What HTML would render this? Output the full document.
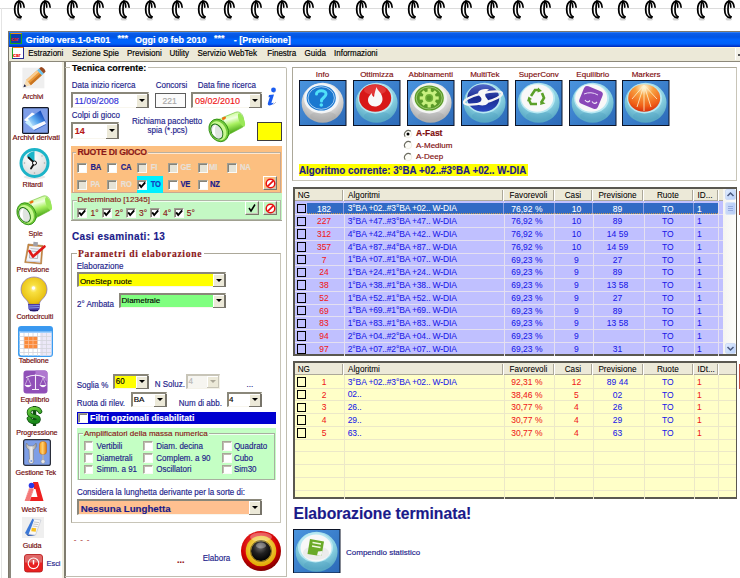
<!DOCTYPE html><html><head><meta charset='utf-8'><style>
*{margin:0;padding:0;box-sizing:border-box}
html,body{width:740px;height:578px;overflow:hidden;background:#fff;font-family:"Liberation Sans",sans-serif;}
.a{position:absolute}
.t{position:absolute;white-space:nowrap;line-height:1;-webkit-text-stroke:0.15px currentColor;margin-top:0.6px}
.g{margin-top:0}
.s8{font-size:8px}
.nv{color:#1a1a8c}
.dr{color:#8b1010}
</style></head><body>
<div class='a' style='left:0;top:8px;width:740px;height:1px;background:#dcdcdc'></div>
<div class='a' style='left:1px;top:8px;width:1px;height:570px;background:#e4e4e4'></div>
<svg class='a' style='left:10.0px;top:0' width='18' height='22' viewBox='0 0 18 22'>
<ellipse cx='8.8' cy='18.9' rx='3.2' ry='1.6' fill='#d4d4d4'/>
<g fill='none' stroke='#000' stroke-linecap='round'>
<path d='M8.8 1.2 C5.5 2.5 4.7 6 4.7 9.5 C4.7 13.5 6.5 17.6 10.2 17.6' stroke-width='1.8'/>
<path d='M9 1.6 C8.2 4 8 7 8 9.5 C8 13 9 16 11 16.8' stroke-width='1.7'/>
<path d='M8.8 1.2 C11.5 0.5 13.8 3 14.1 7.2' stroke-width='1.7'/>
<path d='M9 1.6 C10.2 2.5 10.8 5 10.8 7.2' stroke-width='1.6'/>
<path d='M10.2 17.6 L11 16.8' stroke-width='1.6'/>
</g></svg>
<svg class='a' style='left:36.28px;top:0' width='18' height='22' viewBox='0 0 18 22'>
<ellipse cx='8.8' cy='18.9' rx='3.2' ry='1.6' fill='#d4d4d4'/>
<g fill='none' stroke='#000' stroke-linecap='round'>
<path d='M8.8 1.2 C5.5 2.5 4.7 6 4.7 9.5 C4.7 13.5 6.5 17.6 10.2 17.6' stroke-width='1.8'/>
<path d='M9 1.6 C8.2 4 8 7 8 9.5 C8 13 9 16 11 16.8' stroke-width='1.7'/>
<path d='M8.8 1.2 C11.5 0.5 13.8 3 14.1 7.2' stroke-width='1.7'/>
<path d='M9 1.6 C10.2 2.5 10.8 5 10.8 7.2' stroke-width='1.6'/>
<path d='M10.2 17.6 L11 16.8' stroke-width='1.6'/>
</g></svg>
<svg class='a' style='left:62.56px;top:0' width='18' height='22' viewBox='0 0 18 22'>
<ellipse cx='8.8' cy='18.9' rx='3.2' ry='1.6' fill='#d4d4d4'/>
<g fill='none' stroke='#000' stroke-linecap='round'>
<path d='M8.8 1.2 C5.5 2.5 4.7 6 4.7 9.5 C4.7 13.5 6.5 17.6 10.2 17.6' stroke-width='1.8'/>
<path d='M9 1.6 C8.2 4 8 7 8 9.5 C8 13 9 16 11 16.8' stroke-width='1.7'/>
<path d='M8.8 1.2 C11.5 0.5 13.8 3 14.1 7.2' stroke-width='1.7'/>
<path d='M9 1.6 C10.2 2.5 10.8 5 10.8 7.2' stroke-width='1.6'/>
<path d='M10.2 17.6 L11 16.8' stroke-width='1.6'/>
</g></svg>
<svg class='a' style='left:88.84px;top:0' width='18' height='22' viewBox='0 0 18 22'>
<ellipse cx='8.8' cy='18.9' rx='3.2' ry='1.6' fill='#d4d4d4'/>
<g fill='none' stroke='#000' stroke-linecap='round'>
<path d='M8.8 1.2 C5.5 2.5 4.7 6 4.7 9.5 C4.7 13.5 6.5 17.6 10.2 17.6' stroke-width='1.8'/>
<path d='M9 1.6 C8.2 4 8 7 8 9.5 C8 13 9 16 11 16.8' stroke-width='1.7'/>
<path d='M8.8 1.2 C11.5 0.5 13.8 3 14.1 7.2' stroke-width='1.7'/>
<path d='M9 1.6 C10.2 2.5 10.8 5 10.8 7.2' stroke-width='1.6'/>
<path d='M10.2 17.6 L11 16.8' stroke-width='1.6'/>
</g></svg>
<svg class='a' style='left:115.12px;top:0' width='18' height='22' viewBox='0 0 18 22'>
<ellipse cx='8.8' cy='18.9' rx='3.2' ry='1.6' fill='#d4d4d4'/>
<g fill='none' stroke='#000' stroke-linecap='round'>
<path d='M8.8 1.2 C5.5 2.5 4.7 6 4.7 9.5 C4.7 13.5 6.5 17.6 10.2 17.6' stroke-width='1.8'/>
<path d='M9 1.6 C8.2 4 8 7 8 9.5 C8 13 9 16 11 16.8' stroke-width='1.7'/>
<path d='M8.8 1.2 C11.5 0.5 13.8 3 14.1 7.2' stroke-width='1.7'/>
<path d='M9 1.6 C10.2 2.5 10.8 5 10.8 7.2' stroke-width='1.6'/>
<path d='M10.2 17.6 L11 16.8' stroke-width='1.6'/>
</g></svg>
<svg class='a' style='left:141.4px;top:0' width='18' height='22' viewBox='0 0 18 22'>
<ellipse cx='8.8' cy='18.9' rx='3.2' ry='1.6' fill='#d4d4d4'/>
<g fill='none' stroke='#000' stroke-linecap='round'>
<path d='M8.8 1.2 C5.5 2.5 4.7 6 4.7 9.5 C4.7 13.5 6.5 17.6 10.2 17.6' stroke-width='1.8'/>
<path d='M9 1.6 C8.2 4 8 7 8 9.5 C8 13 9 16 11 16.8' stroke-width='1.7'/>
<path d='M8.8 1.2 C11.5 0.5 13.8 3 14.1 7.2' stroke-width='1.7'/>
<path d='M9 1.6 C10.2 2.5 10.8 5 10.8 7.2' stroke-width='1.6'/>
<path d='M10.2 17.6 L11 16.8' stroke-width='1.6'/>
</g></svg>
<svg class='a' style='left:167.68px;top:0' width='18' height='22' viewBox='0 0 18 22'>
<ellipse cx='8.8' cy='18.9' rx='3.2' ry='1.6' fill='#d4d4d4'/>
<g fill='none' stroke='#000' stroke-linecap='round'>
<path d='M8.8 1.2 C5.5 2.5 4.7 6 4.7 9.5 C4.7 13.5 6.5 17.6 10.2 17.6' stroke-width='1.8'/>
<path d='M9 1.6 C8.2 4 8 7 8 9.5 C8 13 9 16 11 16.8' stroke-width='1.7'/>
<path d='M8.8 1.2 C11.5 0.5 13.8 3 14.1 7.2' stroke-width='1.7'/>
<path d='M9 1.6 C10.2 2.5 10.8 5 10.8 7.2' stroke-width='1.6'/>
<path d='M10.2 17.6 L11 16.8' stroke-width='1.6'/>
</g></svg>
<svg class='a' style='left:193.96px;top:0' width='18' height='22' viewBox='0 0 18 22'>
<ellipse cx='8.8' cy='18.9' rx='3.2' ry='1.6' fill='#d4d4d4'/>
<g fill='none' stroke='#000' stroke-linecap='round'>
<path d='M8.8 1.2 C5.5 2.5 4.7 6 4.7 9.5 C4.7 13.5 6.5 17.6 10.2 17.6' stroke-width='1.8'/>
<path d='M9 1.6 C8.2 4 8 7 8 9.5 C8 13 9 16 11 16.8' stroke-width='1.7'/>
<path d='M8.8 1.2 C11.5 0.5 13.8 3 14.1 7.2' stroke-width='1.7'/>
<path d='M9 1.6 C10.2 2.5 10.8 5 10.8 7.2' stroke-width='1.6'/>
<path d='M10.2 17.6 L11 16.8' stroke-width='1.6'/>
</g></svg>
<svg class='a' style='left:220.24px;top:0' width='18' height='22' viewBox='0 0 18 22'>
<ellipse cx='8.8' cy='18.9' rx='3.2' ry='1.6' fill='#d4d4d4'/>
<g fill='none' stroke='#000' stroke-linecap='round'>
<path d='M8.8 1.2 C5.5 2.5 4.7 6 4.7 9.5 C4.7 13.5 6.5 17.6 10.2 17.6' stroke-width='1.8'/>
<path d='M9 1.6 C8.2 4 8 7 8 9.5 C8 13 9 16 11 16.8' stroke-width='1.7'/>
<path d='M8.8 1.2 C11.5 0.5 13.8 3 14.1 7.2' stroke-width='1.7'/>
<path d='M9 1.6 C10.2 2.5 10.8 5 10.8 7.2' stroke-width='1.6'/>
<path d='M10.2 17.6 L11 16.8' stroke-width='1.6'/>
</g></svg>
<svg class='a' style='left:246.52px;top:0' width='18' height='22' viewBox='0 0 18 22'>
<ellipse cx='8.8' cy='18.9' rx='3.2' ry='1.6' fill='#d4d4d4'/>
<g fill='none' stroke='#000' stroke-linecap='round'>
<path d='M8.8 1.2 C5.5 2.5 4.7 6 4.7 9.5 C4.7 13.5 6.5 17.6 10.2 17.6' stroke-width='1.8'/>
<path d='M9 1.6 C8.2 4 8 7 8 9.5 C8 13 9 16 11 16.8' stroke-width='1.7'/>
<path d='M8.8 1.2 C11.5 0.5 13.8 3 14.1 7.2' stroke-width='1.7'/>
<path d='M9 1.6 C10.2 2.5 10.8 5 10.8 7.2' stroke-width='1.6'/>
<path d='M10.2 17.6 L11 16.8' stroke-width='1.6'/>
</g></svg>
<svg class='a' style='left:272.8px;top:0' width='18' height='22' viewBox='0 0 18 22'>
<ellipse cx='8.8' cy='18.9' rx='3.2' ry='1.6' fill='#d4d4d4'/>
<g fill='none' stroke='#000' stroke-linecap='round'>
<path d='M8.8 1.2 C5.5 2.5 4.7 6 4.7 9.5 C4.7 13.5 6.5 17.6 10.2 17.6' stroke-width='1.8'/>
<path d='M9 1.6 C8.2 4 8 7 8 9.5 C8 13 9 16 11 16.8' stroke-width='1.7'/>
<path d='M8.8 1.2 C11.5 0.5 13.8 3 14.1 7.2' stroke-width='1.7'/>
<path d='M9 1.6 C10.2 2.5 10.8 5 10.8 7.2' stroke-width='1.6'/>
<path d='M10.2 17.6 L11 16.8' stroke-width='1.6'/>
</g></svg>
<svg class='a' style='left:299.08px;top:0' width='18' height='22' viewBox='0 0 18 22'>
<ellipse cx='8.8' cy='18.9' rx='3.2' ry='1.6' fill='#d4d4d4'/>
<g fill='none' stroke='#000' stroke-linecap='round'>
<path d='M8.8 1.2 C5.5 2.5 4.7 6 4.7 9.5 C4.7 13.5 6.5 17.6 10.2 17.6' stroke-width='1.8'/>
<path d='M9 1.6 C8.2 4 8 7 8 9.5 C8 13 9 16 11 16.8' stroke-width='1.7'/>
<path d='M8.8 1.2 C11.5 0.5 13.8 3 14.1 7.2' stroke-width='1.7'/>
<path d='M9 1.6 C10.2 2.5 10.8 5 10.8 7.2' stroke-width='1.6'/>
<path d='M10.2 17.6 L11 16.8' stroke-width='1.6'/>
</g></svg>
<svg class='a' style='left:325.36px;top:0' width='18' height='22' viewBox='0 0 18 22'>
<ellipse cx='8.8' cy='18.9' rx='3.2' ry='1.6' fill='#d4d4d4'/>
<g fill='none' stroke='#000' stroke-linecap='round'>
<path d='M8.8 1.2 C5.5 2.5 4.7 6 4.7 9.5 C4.7 13.5 6.5 17.6 10.2 17.6' stroke-width='1.8'/>
<path d='M9 1.6 C8.2 4 8 7 8 9.5 C8 13 9 16 11 16.8' stroke-width='1.7'/>
<path d='M8.8 1.2 C11.5 0.5 13.8 3 14.1 7.2' stroke-width='1.7'/>
<path d='M9 1.6 C10.2 2.5 10.8 5 10.8 7.2' stroke-width='1.6'/>
<path d='M10.2 17.6 L11 16.8' stroke-width='1.6'/>
</g></svg>
<svg class='a' style='left:351.64px;top:0' width='18' height='22' viewBox='0 0 18 22'>
<ellipse cx='8.8' cy='18.9' rx='3.2' ry='1.6' fill='#d4d4d4'/>
<g fill='none' stroke='#000' stroke-linecap='round'>
<path d='M8.8 1.2 C5.5 2.5 4.7 6 4.7 9.5 C4.7 13.5 6.5 17.6 10.2 17.6' stroke-width='1.8'/>
<path d='M9 1.6 C8.2 4 8 7 8 9.5 C8 13 9 16 11 16.8' stroke-width='1.7'/>
<path d='M8.8 1.2 C11.5 0.5 13.8 3 14.1 7.2' stroke-width='1.7'/>
<path d='M9 1.6 C10.2 2.5 10.8 5 10.8 7.2' stroke-width='1.6'/>
<path d='M10.2 17.6 L11 16.8' stroke-width='1.6'/>
</g></svg>
<svg class='a' style='left:377.92px;top:0' width='18' height='22' viewBox='0 0 18 22'>
<ellipse cx='8.8' cy='18.9' rx='3.2' ry='1.6' fill='#d4d4d4'/>
<g fill='none' stroke='#000' stroke-linecap='round'>
<path d='M8.8 1.2 C5.5 2.5 4.7 6 4.7 9.5 C4.7 13.5 6.5 17.6 10.2 17.6' stroke-width='1.8'/>
<path d='M9 1.6 C8.2 4 8 7 8 9.5 C8 13 9 16 11 16.8' stroke-width='1.7'/>
<path d='M8.8 1.2 C11.5 0.5 13.8 3 14.1 7.2' stroke-width='1.7'/>
<path d='M9 1.6 C10.2 2.5 10.8 5 10.8 7.2' stroke-width='1.6'/>
<path d='M10.2 17.6 L11 16.8' stroke-width='1.6'/>
</g></svg>
<svg class='a' style='left:404.2px;top:0' width='18' height='22' viewBox='0 0 18 22'>
<ellipse cx='8.8' cy='18.9' rx='3.2' ry='1.6' fill='#d4d4d4'/>
<g fill='none' stroke='#000' stroke-linecap='round'>
<path d='M8.8 1.2 C5.5 2.5 4.7 6 4.7 9.5 C4.7 13.5 6.5 17.6 10.2 17.6' stroke-width='1.8'/>
<path d='M9 1.6 C8.2 4 8 7 8 9.5 C8 13 9 16 11 16.8' stroke-width='1.7'/>
<path d='M8.8 1.2 C11.5 0.5 13.8 3 14.1 7.2' stroke-width='1.7'/>
<path d='M9 1.6 C10.2 2.5 10.8 5 10.8 7.2' stroke-width='1.6'/>
<path d='M10.2 17.6 L11 16.8' stroke-width='1.6'/>
</g></svg>
<svg class='a' style='left:430.48px;top:0' width='18' height='22' viewBox='0 0 18 22'>
<ellipse cx='8.8' cy='18.9' rx='3.2' ry='1.6' fill='#d4d4d4'/>
<g fill='none' stroke='#000' stroke-linecap='round'>
<path d='M8.8 1.2 C5.5 2.5 4.7 6 4.7 9.5 C4.7 13.5 6.5 17.6 10.2 17.6' stroke-width='1.8'/>
<path d='M9 1.6 C8.2 4 8 7 8 9.5 C8 13 9 16 11 16.8' stroke-width='1.7'/>
<path d='M8.8 1.2 C11.5 0.5 13.8 3 14.1 7.2' stroke-width='1.7'/>
<path d='M9 1.6 C10.2 2.5 10.8 5 10.8 7.2' stroke-width='1.6'/>
<path d='M10.2 17.6 L11 16.8' stroke-width='1.6'/>
</g></svg>
<svg class='a' style='left:456.76px;top:0' width='18' height='22' viewBox='0 0 18 22'>
<ellipse cx='8.8' cy='18.9' rx='3.2' ry='1.6' fill='#d4d4d4'/>
<g fill='none' stroke='#000' stroke-linecap='round'>
<path d='M8.8 1.2 C5.5 2.5 4.7 6 4.7 9.5 C4.7 13.5 6.5 17.6 10.2 17.6' stroke-width='1.8'/>
<path d='M9 1.6 C8.2 4 8 7 8 9.5 C8 13 9 16 11 16.8' stroke-width='1.7'/>
<path d='M8.8 1.2 C11.5 0.5 13.8 3 14.1 7.2' stroke-width='1.7'/>
<path d='M9 1.6 C10.2 2.5 10.8 5 10.8 7.2' stroke-width='1.6'/>
<path d='M10.2 17.6 L11 16.8' stroke-width='1.6'/>
</g></svg>
<svg class='a' style='left:483.04px;top:0' width='18' height='22' viewBox='0 0 18 22'>
<ellipse cx='8.8' cy='18.9' rx='3.2' ry='1.6' fill='#d4d4d4'/>
<g fill='none' stroke='#000' stroke-linecap='round'>
<path d='M8.8 1.2 C5.5 2.5 4.7 6 4.7 9.5 C4.7 13.5 6.5 17.6 10.2 17.6' stroke-width='1.8'/>
<path d='M9 1.6 C8.2 4 8 7 8 9.5 C8 13 9 16 11 16.8' stroke-width='1.7'/>
<path d='M8.8 1.2 C11.5 0.5 13.8 3 14.1 7.2' stroke-width='1.7'/>
<path d='M9 1.6 C10.2 2.5 10.8 5 10.8 7.2' stroke-width='1.6'/>
<path d='M10.2 17.6 L11 16.8' stroke-width='1.6'/>
</g></svg>
<svg class='a' style='left:509.32px;top:0' width='18' height='22' viewBox='0 0 18 22'>
<ellipse cx='8.8' cy='18.9' rx='3.2' ry='1.6' fill='#d4d4d4'/>
<g fill='none' stroke='#000' stroke-linecap='round'>
<path d='M8.8 1.2 C5.5 2.5 4.7 6 4.7 9.5 C4.7 13.5 6.5 17.6 10.2 17.6' stroke-width='1.8'/>
<path d='M9 1.6 C8.2 4 8 7 8 9.5 C8 13 9 16 11 16.8' stroke-width='1.7'/>
<path d='M8.8 1.2 C11.5 0.5 13.8 3 14.1 7.2' stroke-width='1.7'/>
<path d='M9 1.6 C10.2 2.5 10.8 5 10.8 7.2' stroke-width='1.6'/>
<path d='M10.2 17.6 L11 16.8' stroke-width='1.6'/>
</g></svg>
<svg class='a' style='left:535.6px;top:0' width='18' height='22' viewBox='0 0 18 22'>
<ellipse cx='8.8' cy='18.9' rx='3.2' ry='1.6' fill='#d4d4d4'/>
<g fill='none' stroke='#000' stroke-linecap='round'>
<path d='M8.8 1.2 C5.5 2.5 4.7 6 4.7 9.5 C4.7 13.5 6.5 17.6 10.2 17.6' stroke-width='1.8'/>
<path d='M9 1.6 C8.2 4 8 7 8 9.5 C8 13 9 16 11 16.8' stroke-width='1.7'/>
<path d='M8.8 1.2 C11.5 0.5 13.8 3 14.1 7.2' stroke-width='1.7'/>
<path d='M9 1.6 C10.2 2.5 10.8 5 10.8 7.2' stroke-width='1.6'/>
<path d='M10.2 17.6 L11 16.8' stroke-width='1.6'/>
</g></svg>
<svg class='a' style='left:561.88px;top:0' width='18' height='22' viewBox='0 0 18 22'>
<ellipse cx='8.8' cy='18.9' rx='3.2' ry='1.6' fill='#d4d4d4'/>
<g fill='none' stroke='#000' stroke-linecap='round'>
<path d='M8.8 1.2 C5.5 2.5 4.7 6 4.7 9.5 C4.7 13.5 6.5 17.6 10.2 17.6' stroke-width='1.8'/>
<path d='M9 1.6 C8.2 4 8 7 8 9.5 C8 13 9 16 11 16.8' stroke-width='1.7'/>
<path d='M8.8 1.2 C11.5 0.5 13.8 3 14.1 7.2' stroke-width='1.7'/>
<path d='M9 1.6 C10.2 2.5 10.8 5 10.8 7.2' stroke-width='1.6'/>
<path d='M10.2 17.6 L11 16.8' stroke-width='1.6'/>
</g></svg>
<svg class='a' style='left:588.16px;top:0' width='18' height='22' viewBox='0 0 18 22'>
<ellipse cx='8.8' cy='18.9' rx='3.2' ry='1.6' fill='#d4d4d4'/>
<g fill='none' stroke='#000' stroke-linecap='round'>
<path d='M8.8 1.2 C5.5 2.5 4.7 6 4.7 9.5 C4.7 13.5 6.5 17.6 10.2 17.6' stroke-width='1.8'/>
<path d='M9 1.6 C8.2 4 8 7 8 9.5 C8 13 9 16 11 16.8' stroke-width='1.7'/>
<path d='M8.8 1.2 C11.5 0.5 13.8 3 14.1 7.2' stroke-width='1.7'/>
<path d='M9 1.6 C10.2 2.5 10.8 5 10.8 7.2' stroke-width='1.6'/>
<path d='M10.2 17.6 L11 16.8' stroke-width='1.6'/>
</g></svg>
<svg class='a' style='left:614.44px;top:0' width='18' height='22' viewBox='0 0 18 22'>
<ellipse cx='8.8' cy='18.9' rx='3.2' ry='1.6' fill='#d4d4d4'/>
<g fill='none' stroke='#000' stroke-linecap='round'>
<path d='M8.8 1.2 C5.5 2.5 4.7 6 4.7 9.5 C4.7 13.5 6.5 17.6 10.2 17.6' stroke-width='1.8'/>
<path d='M9 1.6 C8.2 4 8 7 8 9.5 C8 13 9 16 11 16.8' stroke-width='1.7'/>
<path d='M8.8 1.2 C11.5 0.5 13.8 3 14.1 7.2' stroke-width='1.7'/>
<path d='M9 1.6 C10.2 2.5 10.8 5 10.8 7.2' stroke-width='1.6'/>
<path d='M10.2 17.6 L11 16.8' stroke-width='1.6'/>
</g></svg>
<svg class='a' style='left:640.72px;top:0' width='18' height='22' viewBox='0 0 18 22'>
<ellipse cx='8.8' cy='18.9' rx='3.2' ry='1.6' fill='#d4d4d4'/>
<g fill='none' stroke='#000' stroke-linecap='round'>
<path d='M8.8 1.2 C5.5 2.5 4.7 6 4.7 9.5 C4.7 13.5 6.5 17.6 10.2 17.6' stroke-width='1.8'/>
<path d='M9 1.6 C8.2 4 8 7 8 9.5 C8 13 9 16 11 16.8' stroke-width='1.7'/>
<path d='M8.8 1.2 C11.5 0.5 13.8 3 14.1 7.2' stroke-width='1.7'/>
<path d='M9 1.6 C10.2 2.5 10.8 5 10.8 7.2' stroke-width='1.6'/>
<path d='M10.2 17.6 L11 16.8' stroke-width='1.6'/>
</g></svg>
<svg class='a' style='left:667.0px;top:0' width='18' height='22' viewBox='0 0 18 22'>
<ellipse cx='8.8' cy='18.9' rx='3.2' ry='1.6' fill='#d4d4d4'/>
<g fill='none' stroke='#000' stroke-linecap='round'>
<path d='M8.8 1.2 C5.5 2.5 4.7 6 4.7 9.5 C4.7 13.5 6.5 17.6 10.2 17.6' stroke-width='1.8'/>
<path d='M9 1.6 C8.2 4 8 7 8 9.5 C8 13 9 16 11 16.8' stroke-width='1.7'/>
<path d='M8.8 1.2 C11.5 0.5 13.8 3 14.1 7.2' stroke-width='1.7'/>
<path d='M9 1.6 C10.2 2.5 10.8 5 10.8 7.2' stroke-width='1.6'/>
<path d='M10.2 17.6 L11 16.8' stroke-width='1.6'/>
</g></svg>
<svg class='a' style='left:693.28px;top:0' width='18' height='22' viewBox='0 0 18 22'>
<ellipse cx='8.8' cy='18.9' rx='3.2' ry='1.6' fill='#d4d4d4'/>
<g fill='none' stroke='#000' stroke-linecap='round'>
<path d='M8.8 1.2 C5.5 2.5 4.7 6 4.7 9.5 C4.7 13.5 6.5 17.6 10.2 17.6' stroke-width='1.8'/>
<path d='M9 1.6 C8.2 4 8 7 8 9.5 C8 13 9 16 11 16.8' stroke-width='1.7'/>
<path d='M8.8 1.2 C11.5 0.5 13.8 3 14.1 7.2' stroke-width='1.7'/>
<path d='M9 1.6 C10.2 2.5 10.8 5 10.8 7.2' stroke-width='1.6'/>
<path d='M10.2 17.6 L11 16.8' stroke-width='1.6'/>
</g></svg>
<svg class='a' style='left:719.56px;top:0' width='18' height='22' viewBox='0 0 18 22'>
<ellipse cx='8.8' cy='18.9' rx='3.2' ry='1.6' fill='#d4d4d4'/>
<g fill='none' stroke='#000' stroke-linecap='round'>
<path d='M8.8 1.2 C5.5 2.5 4.7 6 4.7 9.5 C4.7 13.5 6.5 17.6 10.2 17.6' stroke-width='1.8'/>
<path d='M9 1.6 C8.2 4 8 7 8 9.5 C8 13 9 16 11 16.8' stroke-width='1.7'/>
<path d='M8.8 1.2 C11.5 0.5 13.8 3 14.1 7.2' stroke-width='1.7'/>
<path d='M9 1.6 C10.2 2.5 10.8 5 10.8 7.2' stroke-width='1.6'/>
<path d='M10.2 17.6 L11 16.8' stroke-width='1.6'/>
</g></svg>
<div class='a' style='left:8px;top:31px;width:732px;height:547px;background:#ece9d8;border-left:1px solid #7d786c;border-top:1px solid #7d786c'></div>
<div class='a' style='left:9px;top:32px;width:731px;height:15px;background:linear-gradient(#3a8cff 0,#0a5ce8 1.5px,#0054e3 5px,#0064ff 8px,#0060f8 12px,#0038cf 14px,#0028b0 15px)'></div>
<div class='a' style='left:10px;top:33px;width:12px;height:11px;background:#0a3fae;border:1px solid #1ba31b;border-top-color:#f08a10'></div>
<div class='t' style='left:11px;top:36px;font-size:5px;color:#e02020;font-weight:bold'>car</div>
<div class='t' style='left:25.7px;top:35px;font-size:9px;font-weight:bold;color:#fff'>Grid90 vers.1-0-R01</div>
<div class='t' style='left:117.6px;top:33.2px;font-size:9px;font-weight:bold;color:#fff'>***</div>
<div class='t' style='left:135.1px;top:35px;font-size:9px;font-weight:bold;color:#fff'>Oggi 09 feb 2010</div>
<div class='t' style='left:214px;top:33.2px;font-size:9px;font-weight:bold;color:#fff'>***</div>
<div class='t' style='left:233.8px;top:35px;font-size:9px;font-weight:bold;color:#fff'>- [Previsione]</div>
<div class='a' style='left:9px;top:47px;width:731px;height:14px;background:#ece9d8;border-top:1px solid #fff6e0'></div>
<div class='a' style='left:12px;top:47px;width:12px;height:12px;background:#fff;border:1px solid #2a2a90;border-left-color:#20a020;border-top-color:#f08010'></div>
<div class='t' style='left:13px;top:52px;font-size:5px;color:#e00;font-weight:bold'>car</div>
<div class='t' style='left:28.2px;top:49.3px;font-size:8px;color:#000;transform:scaleY(1.15);transform-origin:0 50%'>Estrazioni</div>
<div class='t' style='left:71.9px;top:49.3px;font-size:8px;color:#000;transform:scaleY(1.15);transform-origin:0 50%'>Sezione Spie</div>
<div class='t' style='left:127px;top:49.3px;font-size:8px;color:#000;transform:scaleY(1.15);transform-origin:0 50%'>Previsioni</div>
<div class='t' style='left:169.4px;top:49.3px;font-size:8px;color:#000;transform:scaleY(1.15);transform-origin:0 50%'>Utility</div>
<div class='t' style='left:197.5px;top:49.3px;font-size:8px;color:#000;transform:scaleY(1.15);transform-origin:0 50%'>Servizio WebTek</div>
<div class='t' style='left:267.3px;top:49.3px;font-size:8px;color:#000;transform:scaleY(1.15);transform-origin:0 50%'>Finestra</div>
<div class='t' style='left:304.5px;top:49.3px;font-size:8px;color:#000;transform:scaleY(1.15);transform-origin:0 50%'>Guida</div>
<div class='t' style='left:334px;top:49.3px;font-size:8px;color:#000;transform:scaleY(1.15);transform-origin:0 50%'>Informazioni</div>
<div class='a' style='left:8px;top:61px;width:732px;height:1px;background:#8c887a'></div>
<div class='a' style='left:735px;top:47.5px;width:5px;height:12.5px;background:#f2f0e6;border-left:1px solid #fff'></div>
<div class='a' style='left:738.3px;top:54px;width:2px;height:2px;background:#555'></div>
<div class='a' style='left:9px;top:62px;width:731px;height:516px;background:#fff'></div>
<div class='a' style='left:9px;top:62px;width:2px;height:516px;background:#8a877c'></div>
<div class='a' style='left:62px;top:62px;width:1.5px;height:516px;background:#f0eee0'></div>
<svg class='a' style='left:22px;top:67px' width='24' height='22' viewBox='0 0 24 22'>
<rect x='0.4' y='0.7' width='22' height='20.6' fill='#efefef'/>
<path d='M4.1 13.05 L15.16 3.13 L19.84 8.33 L8.79 18.25Z' fill='#eb9a3a'/>
<path d='M4.1 13.05 L15.16 3.13 L16.8 4.95 L5.75 14.9Z' fill='#f9cc90'/>
<path d='M7.2 16.5 L18.2 6.6 L19.84 8.33 L8.79 18.25Z' fill='#c87422'/>
<path d='M15.16 3.13 L17.11 1.4 L21.79 6.6 L19.84 8.33Z' fill='#6cc4ee'/>
<path d='M17.11 1.4 L18.66 0.2 C20 -0.5 23 2 23.6 4.6 L21.79 6.6Z' fill='#9a4a20'/>
<path d='M1.6 20 L4.1 13.05 L8.79 18.25Z' fill='#f6dcb4'/>
<path d='M1.4 20.2 L2.4 17.2 L4.3 19.3Z' fill='#18204a'/>
</svg>
<div class='t' style='left:22.5px;top:92.6px;font-size:7.2px;color:#700808;letter-spacing:-0.1px'>Archivi</div>
<svg class='a' style='left:22.4px;top:107px' width='27' height='27' viewBox='0 0 27 27'>
<defs><linearGradient id='fd' x1='0.1' y1='0.9' x2='0.9' y2='0.1'><stop offset='0' stop-color='#e0f4ff'/><stop offset='0.45' stop-color='#5aaaf0'/><stop offset='1' stop-color='#0838b0'/></linearGradient></defs>
<rect x='0.6' y='0.6' width='25.8' height='25.8' rx='1' fill='#7e9ee8' stroke='#141a28' stroke-width='1.2'/>
<path d='M2 13 L10 5.5 L14 7.5 L7 16Z' fill='#fbfdff'/>
<path d='M6 11.5 L18.5 3.5 L23.5 14.5 L11.5 22.5Z' fill='url(#fd)'/>
<path d='M3 15.5 L7 13 L12 21 L11.5 22.5Z' fill='#c8f0ff'/>
<path d='M10 19.5 L22.5 14 L24 17 L12 23Z' fill='#f8f8fc'/>
<path d='M12 23 L24 17 L23.6 18 L12.4 23.8Z' fill='#3a6ac8'/>
</svg>
<div class='t' style='left:12.6px;top:133.8px;font-size:7.5px;color:#700808;letter-spacing:-0.1px'>Archivi derivati</div>
<svg class='a' style='left:18px;top:147px' width='33' height='33' viewBox='0 0 33 33'>
<defs><radialGradient id='cf' cx='0.4' cy='0.3' r='0.8'><stop offset='0' stop-color='#ffffff'/><stop offset='1' stop-color='#d4d8d8'/></radialGradient></defs>
<ellipse cx='16.5' cy='30' rx='11' ry='2' fill='#e8e8e8'/>
<circle cx='16.5' cy='16' r='15' fill='#1cb4c8'/>
<circle cx='16.5' cy='16' r='12' fill='url(#cf)'/>
<path d='M16.5 16 L8.6 9.2 A12 12 0 0 1 16.5 4Z' fill='#1cb4c8'/>
<path d='M16.5 16 L10.5 10.5 M16.5 16 L13 21.5' stroke='#111' stroke-width='1.8' stroke-linecap='round'/>
<circle cx='16.5' cy='16' r='2' fill='#fff' stroke='#111' stroke-width='1'/>
<circle cx='16.5' cy='26' r='0.8' fill='#aaa'/><circle cx='26.5' cy='16' r='0.8' fill='#aaa'/><circle cx='6.5' cy='16' r='0.8' fill='#aaa'/><circle cx='24' cy='9' r='0.7' fill='#aaa'/>
</svg>
<div class='t' style='left:22.6px;top:180.5px;font-size:7.2px;color:#700808;letter-spacing:-0.1px'>Ritardi</div>
<svg class='a' style='left:14px;top:192.5px' width='39' height='34' viewBox='0 0 40 35'>
<defs><linearGradient id='fb140' x1='0.2' y1='0' x2='0.5' y2='1'><stop offset='0' stop-color='#b8f870'/><stop offset='0.35' stop-color='#f0ffe0'/><stop offset='0.6' stop-color='#a8f060'/><stop offset='1' stop-color='#40a010'/></linearGradient>
<linearGradient id='fc140' x1='0' y1='0' x2='0.6' y2='1'><stop offset='0' stop-color='#a0f050'/><stop offset='0.4' stop-color='#e8ffd0'/><stop offset='1' stop-color='#50b018'/></linearGradient></defs>
<path d='M15.8 8.9 L29.6 3.3 C33.5 1.8 37 5 37.5 10 C38 14 37.6 16.5 36.8 18.1 L24.3 24.7Z' fill='url(#fb140)' stroke='#60b828' stroke-width='0.6'/>
<ellipse cx='35.5' cy='11' rx='2.6' ry='7.2' transform='rotate(-22 35.5 11)' fill='#9ae858'/>
<path d='M7.9 10.5 L15.8 8.9 L24.3 24.7 L17.7 31.9Z' fill='url(#fc140)'/>
<ellipse cx='12.8' cy='21.4' rx='9.3' ry='11.8' transform='rotate(-28 12.8 21.4)' fill='#70c838' stroke='#2a8a10' stroke-width='0.8'/>
<ellipse cx='12.3' cy='21.8' rx='7.6' ry='10' transform='rotate(-28 12.3 21.8)' fill='#c8f890'/>
<ellipse cx='10.8' cy='22.5' rx='5.8' ry='8.6' transform='rotate(-28 10.8 22.5)' fill='#1a7010'/>
<ellipse cx='10.8' cy='22.6' rx='4.9' ry='7.6' transform='rotate(-28 10.8 22.6)' fill='#e0e4e0'/>
<path d='M6.5 25 C5.5 21 7 17 10 15.8 C8.5 19 8.5 23 10 28Z' fill='#ffffff'/>
<ellipse cx='18' cy='9.3' rx='2.2' ry='1.3' transform='rotate(-25 18 9.3)' fill='#f07010'/>
</svg>
<div class='t' style='left:28.6px;top:229.3px;font-size:7.2px;color:#700808;letter-spacing:-0.1px'>Spie</div>
<svg class='a' style='left:24px;top:241px' width='22' height='24' viewBox='0 0 22 24'>
<path d='M4 3 L19 4.5 L17.5 23 L0.7 21.5Z' fill='#c88a48' stroke='#a06828' stroke-width='0.5'/>
<path d='M5.3 5 L17.5 6 L16.2 21.5 L2.2 20.3Z' fill='#f2f4fa'/>
<path d='M3 19.5 L16.3 20.6 L16.2 21.5 L2.2 20.3Z' fill='#c8d0e8'/>
<path d='M9.5 0.8 L14 1.3 L13.6 5.2 L9 4.7Z' fill='#a0a0a8'/>
<path d='M6.5 7.5 L15.5 8.3' stroke='#b0b0b8' stroke-width='0.8'/>
<path d='M6 10 L14 10.6 L13.5 17.5 L5.5 17Z' fill='none' stroke='#a0a0a8' stroke-width='0.8'/>
<path d='M5.5 10 L9 15.6 L20.5 5.5' fill='none' stroke='#e01818' stroke-width='2.6' stroke-linecap='round' stroke-linejoin='round'/>
</svg>
<div class='t' style='left:16.5px;top:265.6px;font-size:7.2px;color:#700808;letter-spacing:-0.1px'>Previsione</div>
<svg class='a' style='left:20px;top:276px' width='28' height='36' viewBox='0 0 28 36'>
<defs><radialGradient id='lb' cx='0.48' cy='0.42' r='0.6'><stop offset='0' stop-color='#fff8c0'/><stop offset='0.25' stop-color='#f8e040'/><stop offset='0.85' stop-color='#e8c010'/><stop offset='1' stop-color='#b89820'/></radialGradient></defs>
<path d='M14 1 C6.5 1 1 6.5 1 13.5 C1 18.5 4 21.5 6.5 24 C8 25.5 8.5 27 8.5 28.5 L19.5 28.5 C19.5 27 20 25.5 21.5 24 C24 21.5 27 18.5 27 13.5 C27 6.5 21.5 1 14 1Z' fill='url(#lb)' stroke='#8070c0' stroke-width='0.7'/>
<circle cx='13.5' cy='12' r='1.8' fill='#ffffff'/>
<path d='M8 28 L20 28 L19.5 33 C19 34.5 17 35.5 14 35.5 C11 35.5 9 34.5 8.5 33Z' fill='#4a3aa8'/>
<path d='M8.3 30 L19.7 29.5 M8.6 32 L19.4 31.5' stroke='#8aa0f0' stroke-width='0.9'/>
<path d='M10 34.5 L18 34.5' stroke='#20186a' stroke-width='1.2'/>
</svg>
<div class='t' style='left:16.5px;top:312.8px;font-size:7.2px;color:#700808;letter-spacing:-0.1px'>Cortocircuiti</div>
<svg class='a' style='left:17.5px;top:325.5px' width='35' height='31' viewBox='0 0 35 31'>
<rect x='0.8' y='0.8' width='33.4' height='29.4' rx='2.5' fill='#fff' stroke='#3c9cf0' stroke-width='1.6'/>
<rect x='0.8' y='0.8' width='33.4' height='5' rx='2' fill='#3a98f0'/>
<rect x='1.6' y='5.8' width='31.8' height='1.2' fill='#a0d0ff'/>
<rect x='22' y='7' width='11.5' height='22.5' fill='#ece8f8'/>
<g stroke='#d4d4dc' stroke-width='0.8'>
<path d='M1.5 10.5 H33.5 M1.5 14.5 H33.5 M1.5 18.5 H33.5 M1.5 22.5 H33.5 M1.5 26.5 H33.5'/>
<path d='M6 7 V30 M10.5 7 V30 M15 7 V30 M19.5 7 V30 M24 7 V30 M28.5 7 V30'/>
</g>
<rect x='6.3' y='10.8' width='13' height='11.5' fill='#fa8a3a'/>
<g stroke='#fcc098' stroke-width='0.7'><path d='M6.3 14.5 H19.3 M6.3 18.5 H19.3 M10.5 10.8 V22.3 M15 10.8 V22.3'/></g>
</svg>
<div class='t' style='left:18.7px;top:356.5px;font-size:7.2px;color:#700808;letter-spacing:-0.1px'>Tabellone</div>
<svg class='a' style='left:23px;top:370px' width='25' height='24' viewBox='0 0 25 24'>
<rect x='0.5' y='0.5' width='24' height='23' rx='3' fill='#9050b8'/>
<path d='M12.5 0.5 L21.5 0.5 Q24.5 0.5 24.5 3.5 L24.5 12 Q18 6 12.5 5Z' fill='#b078d0'/>
<path d='M3 7.5 Q12.5 3 22 7.5' stroke='#f4ecf8' stroke-width='1.1' fill='none'/>
<path d='M12.5 4.5 V19 M9 19.5 H16' stroke='#f4ecf8' stroke-width='1.1'/>
<path d='M5 8 L2 15 M5 8 L8 15 M20 8 L17 15 M20 8 L23 15' stroke='#e8d8f0' stroke-width='0.6'/>
<path d='M1.5 15 Q5 19.5 8.5 15Z M16.5 15 Q20 19.5 23.5 15Z' fill='#f8f4fc'/>
</svg>
<div class='t' style='left:20.5px;top:395px;font-size:7.2px;color:#700808;letter-spacing:-0.1px'>Equilibrio</div>
<svg class='a' style='left:26px;top:405.5px' width='17' height='20' viewBox='0 0 17 20'>
<defs><linearGradient id='dl' x1='0' y1='0' x2='0.3' y2='1'><stop offset='0' stop-color='#70d040'/><stop offset='1' stop-color='#1a8a1a'/></linearGradient></defs>
<path d='M14 5.5 C13 3 10.5 2.5 8.5 2.5 C5 2.5 3 4.2 3 6.5 C3 9.5 6 10 8.5 10.5 C11 11 12.5 11.5 12.5 13.2 C12.5 15 10.5 15.8 8.5 15.8 C6 15.8 4 14.8 3 12.5' fill='none' stroke='#0e5010' stroke-width='4.6' stroke-linecap='round'/>
<path d='M8.5 0.8 V18.8' stroke='#0e5010' stroke-width='3.4' stroke-linecap='round'/>
<path d='M14 5.5 C13 3 10.5 2.5 8.5 2.5 C5 2.5 3 4.2 3 6.5 C3 9.5 6 10 8.5 10.5 C11 11 12.5 11.5 12.5 13.2 C12.5 15 10.5 15.8 8.5 15.8 C6 15.8 4 14.8 3 12.5' fill='none' stroke='url(#dl)' stroke-width='3.2' stroke-linecap='round'/>
<path d='M8.5 1.2 V18.4' stroke='url(#dl)' stroke-width='2' stroke-linecap='round'/>
</svg>
<div class='t' style='left:16.3px;top:428.8px;font-size:7.2px;color:#700808;letter-spacing:-0.1px'>Progressione</div>
<svg class='a' style='left:22.5px;top:439px' width='28' height='27' viewBox='0 0 28 27'>
<defs><linearGradient id='wr' x1='0' y1='0' x2='1' y2='0'><stop offset='0' stop-color='#a8a8a8'/><stop offset='0.5' stop-color='#f0f0f0'/><stop offset='1' stop-color='#909090'/></linearGradient>
<linearGradient id='sd' x1='0' y1='0' x2='1' y2='0'><stop offset='0' stop-color='#f8a018'/><stop offset='0.45' stop-color='#ffd070'/><stop offset='1' stop-color='#e07800'/></linearGradient></defs>
<rect x='0.6' y='0.6' width='26.8' height='25.8' rx='2' fill='#7e9ee6' stroke='#2a2e3a' stroke-width='1.2'/>
<path d='M3.5 4 C2.5 6.5 3 9.5 6 10.5 L6.5 20 C5 21 5 24 7.5 24.5 C10 25 11.5 23 10.5 20.5 L10.5 10.5 C13.5 9.5 14 6.5 13 4 L11 6.5 L9.5 7 L7 7 L5.5 6.5Z' fill='url(#wr)' stroke='#707070' stroke-width='0.5'/>
<circle cx='8.3' cy='22' r='1' fill='#7e9ee6'/>
<rect x='16.5' y='2.5' width='7' height='13' rx='3' fill='url(#sd)' stroke='#c06000' stroke-width='0.5'/>
<path d='M20 15.5 V21' stroke='#b0b0b0' stroke-width='1.6'/>
<circle cx='20' cy='22.5' r='2' fill='#e8e8e8' stroke='#909090' stroke-width='0.5'/>
</svg>
<div class='t' style='left:15.5px;top:468.3px;font-size:7.2px;color:#700808;letter-spacing:-0.1px'>Gestione Tek</div>
<svg class='a' style='left:24px;top:481px' width='20' height='21' viewBox='0 0 20 21'>
<path d='M9 1 L14 1 L19.5 20 L3 20 L6.5 16 L13.5 16 L11.5 8 L10 8Z' fill='#ee2020'/>
<path d='M10 8 L6 20 L0.5 20 L6 4Z' fill='#f8a8a8'/>
<path d='M5.2 9 H9 M4.4 11 H8.4 M3.6 13 H7.6 M2.8 15 H7 M2 17 H6.4 M1.2 19 H5.8' stroke='#ee3030' stroke-width='0.8'/>
<circle cx='7.5' cy='4.5' r='2.8' fill='#2838e8'/>
</svg>
<div class='t' style='left:21.5px;top:505.8px;font-size:7.2px;color:#700808;letter-spacing:-0.1px'>WebTek</div>
<svg class='a' style='left:22px;top:516.5px' width='22' height='21' viewBox='0 0 22 21'>
<rect x='0' y='0' width='22' height='21' fill='#efefef'/>
<path d='M11 2 L19 3 L13.5 18 L6 17Z' fill='#f8f8f8' stroke='#b0b8c8' stroke-width='0.5'/>
<path d='M12 5 L17 5.6 M11.3 7 L16.3 7.6 M10.6 9 L15.6 9.6' stroke='#a8a8a8' stroke-width='0.6'/>
<rect x='9.5' y='11' width='4.5' height='3.5' fill='#f8c020' transform='rotate(8 11.7 12.7)'/>
<path d='M10.5 1.5 L12 3 L6.5 17.5 L3 16Z' fill='#3a78d8'/>
<path d='M3 16 L6.5 17.5 L13.5 18.5 L6 19Z' fill='#2a58b0'/>
</svg>
<div class='t' style='left:22.7px;top:541.4px;font-size:7.2px;color:#700808;letter-spacing:-0.1px'>Guida</div>
<svg class='a' style='left:23.5px;top:554px' width='19' height='18.5' viewBox='0 0 19 18.5'>
<rect x='0.5' y='0.5' width='18' height='17.5' rx='2.5' fill='#e82020' stroke='#b01818' stroke-width='0.8'/>
<path d='M1 8.5 L1 3 Q1 1 3 1 L16 1 Q18 1 18 3 L18 8.5Z' fill='#e06868'/>
<circle cx='9.5' cy='9.3' r='5.3' fill='none' stroke='#fff' stroke-width='1.1'/>
<path d='M9.5 6 V10.5' stroke='#fff' stroke-width='1.4'/>
</svg>
<div class='t' style='left:46.6px;top:559px;font-size:7.5px;color:#22228a;letter-spacing:-0.1px'>Esci</div>
<div class='a' style='left:64px;top:62px;width:2px;height:516px;background:#7f7c6e'></div>
<div class='a' style='left:65px;top:67.3px;width:222px;height:509.5px;border:1px solid #c0bdb0;border-left:none;border-radius:0 2px 0 0'></div>
<div class='t' style='left:70px;top:63px;padding:0 2px;background:#fff;font-size:9px;font-weight:bold;color:#000;transform:scaleY(1.1);transform-origin:0 50%'>Tecnica corrente:</div>
<div class='t' style='left:71.8px;top:81.8px;font-size:8px;color:#1e1e8c;transform:scaleY(1.1);transform-origin:0 50%;'>Data inizio ricerca</div>
<div class='t' style='left:155.7px;top:81.8px;font-size:8px;color:#1e1e8c;transform:scaleY(1.1);transform-origin:0 50%;'>Concorsi</div>
<div class='t' style='left:197.7px;top:81.8px;font-size:8px;color:#1e1e8c;transform:scaleY(1.1);transform-origin:0 50%;'>Data fine ricerca</div>
<div class='t' style='left:71.8px;top:111.8px;font-size:8px;color:#1e1e8c;transform:scaleY(1.1);transform-origin:0 50%;'>Colpi di gioco</div>
<div class='a' style='left:71px;top:92px;width:78px;height:16.3px;background:#fff;border-top:2px solid #8a877a;border-left:2px solid #8a877a;border-bottom:1px solid #f8f6ee;border-right:1px solid #f8f6ee'></div>
<div class='a' style='left:136px;top:94px;width:13px;height:14.3px;background:#ece9d8;border-right:2px solid #77746a;border-bottom:1.5px solid #77746a;box-shadow:inset 1px 1px 0 #fff'></div>
<div class='a' style='left:139px;top:98.9px;width:0;height:0;border-left:3.2px solid transparent;border-right:3.2px solid transparent;border-top:3.2px solid #000'></div>
<div class='t' style='left:74.5px;top:96.3px;font-size:9px;color:#3434d8;'>11/09/2008</div>
<div class='a' style='left:191px;top:92px;width:71px;height:16.3px;background:#fff;border-top:2px solid #8a877a;border-left:2px solid #8a877a;border-bottom:1px solid #f8f6ee;border-right:1px solid #f8f6ee'></div>
<div class='a' style='left:249px;top:94px;width:13px;height:14.3px;background:#ece9d8;border-right:2px solid #77746a;border-bottom:1.5px solid #77746a;box-shadow:inset 1px 1px 0 #fff'></div>
<div class='a' style='left:252px;top:98.9px;width:0;height:0;border-left:3.2px solid transparent;border-right:3.2px solid transparent;border-top:3.2px solid #000'></div>
<div class='t' style='left:195px;top:96.3px;font-size:9px;color:#f01818;'>09/02/2010</div>
<div class='a' style='left:71px;top:122px;width:48px;height:16.5px;background:#fff;border-top:2px solid #8a877a;border-left:2px solid #8a877a;border-bottom:1px solid #f8f6ee;border-right:1px solid #f8f6ee'></div>
<div class='a' style='left:106px;top:124px;width:13px;height:14.5px;background:#ece9d8;border-right:2px solid #77746a;border-bottom:1.5px solid #77746a;box-shadow:inset 1px 1px 0 #fff'></div>
<div class='a' style='left:109px;top:129.0px;width:0;height:0;border-left:3.2px solid transparent;border-right:3.2px solid transparent;border-top:3.2px solid #000'></div>
<div class='t' style='left:74.8px;top:126.05px;font-size:9px;color:#b81818;font-weight:bold;'>14</div>
<div class='a' style='left:155px;top:92.5px;width:31px;height:15px;border:1px solid #5c5c5c;background:#fbfbfb'></div>
<div class='t' style='left:162.5px;top:96.8px;font-size:8.5px;color:#a8a8a8;transform:scaleY(1.1);transform-origin:0 50%;'>221</div>
<svg class='a' style='left:264px;top:87px' width='14' height='20' viewBox='0 0 14 20'>
<circle cx='9.5' cy='3' r='2.4' fill='#1a5cf0'/>
<path d='M5 8 L10 7.5 L7.5 15.5 C7.3 16.3 8 16.5 9.5 15.5 L9.2 17 C6.5 19 3.5 19 3.8 16.5 L5.8 10 L4.5 10.2Z' fill='#1a5cf0'/>
<path d='M11 4.5 L10.5 5.5 M9.5 17.5 L12 15' stroke='#b0b0c0' stroke-width='0.8'/>
</svg>
<div class='t' style='left:132px;top:117.5px;font-size:8px;color:#1e1e8c;transform:scaleY(1.1);transform-origin:0 50%;'>Richiama pacchetto</div>
<div class='t' style='left:147.5px;top:126.5px;font-size:8px;color:#1e1e8c;transform:scaleY(1.1);transform-origin:0 50%;'>spia (*.pcs)</div>
<svg class='a' style='left:206px;top:109px' width='40' height='35' viewBox='0 0 40 35'>
<defs><linearGradient id='fb2060' x1='0.2' y1='0' x2='0.5' y2='1'><stop offset='0' stop-color='#b8f870'/><stop offset='0.35' stop-color='#f0ffe0'/><stop offset='0.6' stop-color='#a8f060'/><stop offset='1' stop-color='#40a010'/></linearGradient>
<linearGradient id='fc2060' x1='0' y1='0' x2='0.6' y2='1'><stop offset='0' stop-color='#a0f050'/><stop offset='0.4' stop-color='#e8ffd0'/><stop offset='1' stop-color='#50b018'/></linearGradient></defs>
<path d='M15.8 8.9 L29.6 3.3 C33.5 1.8 37 5 37.5 10 C38 14 37.6 16.5 36.8 18.1 L24.3 24.7Z' fill='url(#fb2060)' stroke='#60b828' stroke-width='0.6'/>
<ellipse cx='35.5' cy='11' rx='2.6' ry='7.2' transform='rotate(-22 35.5 11)' fill='#9ae858'/>
<path d='M7.9 10.5 L15.8 8.9 L24.3 24.7 L17.7 31.9Z' fill='url(#fc2060)'/>
<ellipse cx='12.8' cy='21.4' rx='9.3' ry='11.8' transform='rotate(-28 12.8 21.4)' fill='#70c838' stroke='#2a8a10' stroke-width='0.8'/>
<ellipse cx='12.3' cy='21.8' rx='7.6' ry='10' transform='rotate(-28 12.3 21.8)' fill='#c8f890'/>
<ellipse cx='10.8' cy='22.5' rx='5.8' ry='8.6' transform='rotate(-28 10.8 22.5)' fill='#1a7010'/>
<ellipse cx='10.8' cy='22.6' rx='4.9' ry='7.6' transform='rotate(-28 10.8 22.6)' fill='#e0e4e0'/>
<path d='M6.5 25 C5.5 21 7 17 10 15.8 C8.5 19 8.5 23 10 28Z' fill='#ffffff'/>
<ellipse cx='18' cy='9.3' rx='2.2' ry='1.3' transform='rotate(-25 18 9.3)' fill='#f07010'/>
</svg>
<div class='a' style='left:257px;top:122px;width:25px;height:19px;background:#ffff00;border:1px solid #3c3c3c'></div>
<div class='a' style='left:71px;top:146px;width:211px;height:47px;background:#fcbf80'></div>
<div class='a' style='left:72px;top:152px;width:209px;height:41px;border:1px solid #c8a890;border-top-color:#b8b0a0;box-shadow:inset 1px 1px 0 #ffe8d0'></div>
<div class='t' style='left:76px;top:147.5px;padding:0 1.5px;background:#fcbf80;font-size:8.7px;font-weight:bold;color:#8b1818;letter-spacing:-0.25px'>RUOTE DI GIOCO</div>
<div class='a' style='left:137px;top:176px;width:25.5px;height:17px;background:#00f0ff'></div>
<div class='a' style='left:77.1px;top:162.5px;width:10px;height:10px;background:#fff;border-top:1px solid #a09d90;border-left:1px solid #a09d90;border-bottom:1px solid #fafaf6;border-right:1px solid #fafaf6;box-shadow:inset 1px 1px 0 #85837a'></div>
<div class='t' style='left:90.5px;top:163.3px;font-size:7.6px;color:#20208a;transform:scaleY(1.1);transform-origin:0 50%;font-weight:bold;letter-spacing:-0.2px'>BA</div>
<div class='a' style='left:107.3px;top:162.5px;width:10px;height:10px;background:#fff;border-top:1px solid #a09d90;border-left:1px solid #a09d90;border-bottom:1px solid #fafaf6;border-right:1px solid #fafaf6;box-shadow:inset 1px 1px 0 #85837a'></div>
<div class='t' style='left:120.7px;top:163.3px;font-size:7.6px;color:#20208a;transform:scaleY(1.1);transform-origin:0 50%;font-weight:bold;letter-spacing:-0.2px'>CA</div>
<div class='a' style='left:137.4px;top:162.5px;width:10px;height:10px;background:#e6e3d6;border-top:1px solid #a09d90;border-left:1px solid #a09d90;border-bottom:1px solid #fafaf6;border-right:1px solid #fafaf6;box-shadow:inset 1px 1px 0 #85837a'></div>
<div class='t' style='left:150.7px;top:163.3px;font-size:7.6px;color:#e8e0d8;transform:scaleY(1.1);transform-origin:0 50%;font-weight:bold;letter-spacing:-0.2px'>FI</div>
<div class='a' style='left:167.8px;top:162.5px;width:10px;height:10px;background:#e6e3d6;border-top:1px solid #a09d90;border-left:1px solid #a09d90;border-bottom:1px solid #fafaf6;border-right:1px solid #fafaf6;box-shadow:inset 1px 1px 0 #85837a'></div>
<div class='t' style='left:180.5px;top:163.3px;font-size:7.6px;color:#e8e0d8;transform:scaleY(1.1);transform-origin:0 50%;font-weight:bold;letter-spacing:-0.2px'>GE</div>
<div class='a' style='left:197.6px;top:162.5px;width:10px;height:10px;background:#e6e3d6;border-top:1px solid #a09d90;border-left:1px solid #a09d90;border-bottom:1px solid #fafaf6;border-right:1px solid #fafaf6;box-shadow:inset 1px 1px 0 #85837a'></div>
<div class='t' style='left:209px;top:163.3px;font-size:7.6px;color:#e8e0d8;transform:scaleY(1.1);transform-origin:0 50%;font-weight:bold;letter-spacing:-0.2px'>MI</div>
<div class='a' style='left:226.8px;top:162.5px;width:10px;height:10px;background:#e6e3d6;border-top:1px solid #a09d90;border-left:1px solid #a09d90;border-bottom:1px solid #fafaf6;border-right:1px solid #fafaf6;box-shadow:inset 1px 1px 0 #85837a'></div>
<div class='t' style='left:240px;top:163.3px;font-size:7.6px;color:#e8e0d8;transform:scaleY(1.1);transform-origin:0 50%;font-weight:bold;letter-spacing:-0.2px'>NA</div>
<div class='a' style='left:77.1px;top:180px;width:10px;height:10px;background:#e6e3d6;border-top:1px solid #a09d90;border-left:1px solid #a09d90;border-bottom:1px solid #fafaf6;border-right:1px solid #fafaf6;box-shadow:inset 1px 1px 0 #85837a'></div>
<div class='t' style='left:90.5px;top:180.8px;font-size:7.6px;color:#e8e0d8;transform:scaleY(1.1);transform-origin:0 50%;font-weight:bold;letter-spacing:-0.2px'>PA</div>
<div class='a' style='left:107.3px;top:180px;width:10px;height:10px;background:#e6e3d6;border-top:1px solid #a09d90;border-left:1px solid #a09d90;border-bottom:1px solid #fafaf6;border-right:1px solid #fafaf6;box-shadow:inset 1px 1px 0 #85837a'></div>
<div class='t' style='left:120.7px;top:180.8px;font-size:7.6px;color:#e8e0d8;transform:scaleY(1.1);transform-origin:0 50%;font-weight:bold;letter-spacing:-0.2px'>RO</div>
<div class='a' style='left:137.4px;top:180px;width:10px;height:10px;background:#fff;border-top:1px solid #a09d90;border-left:1px solid #a09d90;border-bottom:1px solid #fafaf6;border-right:1px solid #fafaf6;box-shadow:inset 1px 1px 0 #85837a'></div>
<svg class='a' style='left:137.4px;top:180px' width='10' height='10' viewBox='0 0 10 10'><path d='M2.2 4.4 L4.2 7 L8.2 2.3' fill='none' stroke='#000' stroke-width='1.9'/></svg>
<div class='t' style='left:150.7px;top:180.8px;font-size:7.6px;color:#1040c0;transform:scaleY(1.1);transform-origin:0 50%;font-weight:bold;letter-spacing:-0.2px'>TO</div>
<div class='a' style='left:167.8px;top:180px;width:10px;height:10px;background:#fff;border-top:1px solid #a09d90;border-left:1px solid #a09d90;border-bottom:1px solid #fafaf6;border-right:1px solid #fafaf6;box-shadow:inset 1px 1px 0 #85837a'></div>
<div class='t' style='left:180.5px;top:180.8px;font-size:7.6px;color:#20208a;transform:scaleY(1.1);transform-origin:0 50%;font-weight:bold;letter-spacing:-0.2px'>VE</div>
<div class='a' style='left:197.6px;top:180px;width:10px;height:10px;background:#fff;border-top:1px solid #a09d90;border-left:1px solid #a09d90;border-bottom:1px solid #fafaf6;border-right:1px solid #fafaf6;box-shadow:inset 1px 1px 0 #85837a'></div>
<div class='t' style='left:209.9px;top:180.8px;font-size:7.6px;color:#20208a;transform:scaleY(1.1);transform-origin:0 50%;font-weight:bold;letter-spacing:-0.2px'>NZ</div>
<div class='a' style='left:263px;top:176px;width:14px;height:14px;background:#fcbf80;border-top:1px solid #fff;border-left:1px solid #fff;border-bottom:1px solid #7a776a;border-right:1px solid #7a776a;box-shadow:inset -1px -1px 0 #c8c5b8'></div>
<svg class='a' style='left:264.5px;top:177.5px' width='11' height='11' viewBox='0 0 11 11'><circle cx='5.5' cy='5.5' r='4.3' fill='#fff' stroke='#e81010' stroke-width='1.5'/><path d='M2.6 8.4 L8.4 2.6' stroke='#e81010' stroke-width='1.6'/></svg>
<div class='a' style='left:71px;top:193px;width:211px;height:27.5px;background:#c4f8c4;border-bottom:1px solid #a0a090'></div>
<div class='a' style='left:72px;top:199.5px;width:209px;height:20px;border:1px solid #b0b8a8;box-shadow:inset 1px 1px 0 #f0fff0'></div>
<div class='t' style='left:76.5px;top:195px;padding:0 1px;background:#c4f8c4;font-size:8px;color:#8b1818'>Determinato [12345]</div>
<div class='a' style='left:77.1px;top:207.5px;width:10px;height:10px;background:#fff;border-top:1px solid #a09d90;border-left:1px solid #a09d90;border-bottom:1px solid #fafaf6;border-right:1px solid #fafaf6;box-shadow:inset 1px 1px 0 #85837a'></div>
<svg class='a' style='left:77.1px;top:207.5px' width='10' height='10' viewBox='0 0 10 10'><path d='M2.2 4.4 L4.2 7 L8.2 2.3' fill='none' stroke='#000' stroke-width='1.9'/></svg>
<div class='t' style='left:90.5px;top:208px;font-size:8.5px;color:#8b1818;transform:scaleY(1.1);transform-origin:0 50%;'>1°</div>
<div class='a' style='left:101.7px;top:207.5px;width:10px;height:10px;background:#fff;border-top:1px solid #a09d90;border-left:1px solid #a09d90;border-bottom:1px solid #fafaf6;border-right:1px solid #fafaf6;box-shadow:inset 1px 1px 0 #85837a'></div>
<svg class='a' style='left:101.7px;top:207.5px' width='10' height='10' viewBox='0 0 10 10'><path d='M2.2 4.4 L4.2 7 L8.2 2.3' fill='none' stroke='#000' stroke-width='1.9'/></svg>
<div class='t' style='left:115px;top:208px;font-size:8.5px;color:#8b1818;transform:scaleY(1.1);transform-origin:0 50%;'>2°</div>
<div class='a' style='left:125.5px;top:207.5px;width:10px;height:10px;background:#fff;border-top:1px solid #a09d90;border-left:1px solid #a09d90;border-bottom:1px solid #fafaf6;border-right:1px solid #fafaf6;box-shadow:inset 1px 1px 0 #85837a'></div>
<svg class='a' style='left:125.5px;top:207.5px' width='10' height='10' viewBox='0 0 10 10'><path d='M2.2 4.4 L4.2 7 L8.2 2.3' fill='none' stroke='#000' stroke-width='1.9'/></svg>
<div class='t' style='left:139px;top:208px;font-size:8.5px;color:#8b1818;transform:scaleY(1.1);transform-origin:0 50%;'>3°</div>
<div class='a' style='left:149.5px;top:207.5px;width:10px;height:10px;background:#fff;border-top:1px solid #a09d90;border-left:1px solid #a09d90;border-bottom:1px solid #fafaf6;border-right:1px solid #fafaf6;box-shadow:inset 1px 1px 0 #85837a'></div>
<svg class='a' style='left:149.5px;top:207.5px' width='10' height='10' viewBox='0 0 10 10'><path d='M2.2 4.4 L4.2 7 L8.2 2.3' fill='none' stroke='#000' stroke-width='1.9'/></svg>
<div class='t' style='left:163px;top:208px;font-size:8.5px;color:#8b1818;transform:scaleY(1.1);transform-origin:0 50%;'>4°</div>
<div class='a' style='left:174px;top:207.5px;width:10px;height:10px;background:#fff;border-top:1px solid #a09d90;border-left:1px solid #a09d90;border-bottom:1px solid #fafaf6;border-right:1px solid #fafaf6;box-shadow:inset 1px 1px 0 #85837a'></div>
<svg class='a' style='left:174px;top:207.5px' width='10' height='10' viewBox='0 0 10 10'><path d='M2.2 4.4 L4.2 7 L8.2 2.3' fill='none' stroke='#000' stroke-width='1.9'/></svg>
<div class='t' style='left:186.8px;top:208px;font-size:8.5px;color:#8b1818;transform:scaleY(1.1);transform-origin:0 50%;'>5°</div>
<div class='a' style='left:245px;top:201px;width:14px;height:14px;background:#c4f8c4;border-top:1px solid #fff;border-left:1px solid #fff;border-bottom:1px solid #7a776a;border-right:1px solid #7a776a;box-shadow:inset -1px -1px 0 #c8c5b8'></div>
<svg class='a' style='left:247px;top:203px' width='10' height='10' viewBox='0 0 10 10'><path d='M2 5 L4 8 L8 1.5' fill='none' stroke='#000' stroke-width='1.5'/></svg>
<div class='a' style='left:263px;top:201px;width:14px;height:14px;background:#c4f8c4;border-top:1px solid #fff;border-left:1px solid #fff;border-bottom:1px solid #7a776a;border-right:1px solid #7a776a;box-shadow:inset -1px -1px 0 #c8c5b8'></div>
<svg class='a' style='left:264.5px;top:202.5px' width='11' height='11' viewBox='0 0 11 11'><circle cx='5.5' cy='5.5' r='4.3' fill='#fff' stroke='#e81010' stroke-width='1.5'/><path d='M2.6 8.4 L8.4 2.6' stroke='#e81010' stroke-width='1.6'/></svg>
<div class='t' style='left:72px;top:231.3px;font-size:10px;font-weight:bold;color:#1a1a8a;letter-spacing:0.33px;transform:scaleY(1.1);transform-origin:0 50%'>Casi esaminati: 13</div>
<div class='a' style='left:71px;top:253px;width:210px;height:270px;border:1px solid #aca899;border-right-color:#c8c5b8;border-bottom-color:#c8c5b8'></div>
<div class='t' style='left:76.5px;top:248.5px;padding:0 1.5px;background:#fff;font-family:"Liberation Serif",serif;font-size:9.6px;font-weight:bold;color:#8b1818;letter-spacing:0.68px'>Parametri di elaborazione</div>
<div class='t' style='left:76.7px;top:262px;font-size:8px;color:#1e1e8c;transform:scaleY(1.1);transform-origin:0 50%;'>Elaborazione</div>
<div class='a' style='left:77.4px;top:272.3px;width:148.5px;height:15px;background:#ffff00;border-top:2px solid #8a877a;border-left:2px solid #8a877a;border-bottom:1px solid #f8f6ee;border-right:1px solid #f8f6ee'></div>
<div class='a' style='left:212.9px;top:274.3px;width:13px;height:13px;background:#ece9d8;border-right:2px solid #77746a;border-bottom:1.5px solid #77746a;box-shadow:inset 1px 1px 0 #fff'></div>
<div class='a' style='left:215.9px;top:278.55px;width:0;height:0;border-left:3.2px solid transparent;border-right:3.2px solid transparent;border-top:3.2px solid #000'></div>
<div class='t' style='left:79.9px;top:277px;font-size:8px;color:#000;'>OneStep ruote</div>
<div class='t' style='left:77px;top:300.3px;font-size:8px;color:#1e1e8c;transform:scaleY(1.1);transform-origin:0 50%;'>2° Ambata</div>
<div class='a' style='left:119.3px;top:292.5px;width:106.5px;height:15.3px;background:#80ff80;border-top:2px solid #8a877a;border-left:2px solid #8a877a;border-bottom:1px solid #f8f6ee;border-right:1px solid #f8f6ee'></div>
<div class='a' style='left:212.8px;top:294.5px;width:13px;height:13.3px;background:#ece9d8;border-right:2px solid #77746a;border-bottom:1.5px solid #77746a;box-shadow:inset 1px 1px 0 #fff'></div>
<div class='a' style='left:215.8px;top:298.9px;width:0;height:0;border-left:3.2px solid transparent;border-right:3.2px solid transparent;border-top:3.2px solid #000'></div>
<div class='t' style='left:121.6px;top:296.8px;font-size:8px;color:#000;'>Diametrale</div>
<div class='t' style='left:76.7px;top:381.5px;font-size:8px;color:#1e1e8c;transform:scaleY(1.1);transform-origin:0 50%;'>Soglia %</div>
<div class='a' style='left:113.3px;top:373.6px;width:35.3px;height:15.2px;background:#fff;border-top:2px solid #8a877a;border-left:2px solid #8a877a;border-bottom:1px solid #f8f6ee;border-right:1px solid #f8f6ee'></div>
<div class='a' style='left:135.6px;top:375.6px;width:13px;height:13.2px;background:#ece9d8;border-right:2px solid #77746a;border-bottom:1.5px solid #77746a;box-shadow:inset 1px 1px 0 #fff'></div>
<div class='a' style='left:138.6px;top:379.95000000000005px;width:0;height:0;border-left:3.2px solid transparent;border-right:3.2px solid transparent;border-top:3.2px solid #000'></div>
<div class='a' style='left:115px;top:375.6px;width:21px;height:12.2px;background:#ffff00'></div>
<div class='t' style='left:115.8px;top:377.7px;font-size:8px;color:#000;transform:scaleY(1.1);transform-origin:0 50%;'>60</div>
<div class='t' style='left:154.7px;top:380.8px;font-size:8px;color:#1e1e8c;transform:scaleY(1.1);transform-origin:0 50%;'>N Soluz.</div>
<div class='a' style='left:185.6px;top:373.5px;width:34.5px;height:15.1px;background:#f6f5f0;border-top:2px solid #c8c5b8;border-left:2px solid #c8c5b8;border-bottom:1px solid #f4f2e8;border-right:1px solid #f4f2e8'></div>
<div class='a' style='left:206.5px;top:375.5px;width:12px;height:12px;background:#ece9d8;border-right:1px solid #c8c5b8;border-bottom:1px solid #c8c5b8;box-shadow:inset 1px 1px 0 #fff'></div>
<div class='a' style='left:209.5px;top:380px;width:0;height:0;border-left:3px solid transparent;border-right:3px solid transparent;border-top:3px solid #aca899'></div>
<div class='t' style='left:188.5px;top:377.5px;font-size:8px;color:#b8b8b8;transform:scaleY(1.1);transform-origin:0 50%;'>4</div>
<div class='t' style='left:246.5px;top:380.5px;font-size:8px;color:#1e1e8c;transform:scaleY(1.1);transform-origin:0 50%;'>...</div>
<div class='t' style='left:76.7px;top:399.3px;font-size:8px;color:#1e1e8c;transform:scaleY(1.1);transform-origin:0 50%;'>Ruota di rilev.</div>
<div class='a' style='left:131.4px;top:391.8px;width:35.4px;height:15px;background:#fff;border-top:2px solid #8a877a;border-left:2px solid #8a877a;border-bottom:1px solid #f8f6ee;border-right:1px solid #f8f6ee'></div>
<div class='a' style='left:153.8px;top:393.8px;width:13px;height:13px;background:#ece9d8;border-right:2px solid #77746a;border-bottom:1.5px solid #77746a;box-shadow:inset 1px 1px 0 #fff'></div>
<div class='a' style='left:156.8px;top:398.05px;width:0;height:0;border-left:3.2px solid transparent;border-right:3.2px solid transparent;border-top:3.2px solid #000'></div>
<div class='t' style='left:133.70000000000002px;top:395.8px;font-size:8px;color:#000;'>BA</div>
<div class='t' style='left:178.8px;top:399px;font-size:8px;color:#1e1e8c;transform:scaleY(1.1);transform-origin:0 50%;'>Num di abb.</div>
<div class='a' style='left:226.6px;top:391.5px;width:35.5px;height:15.2px;background:#fff;border-top:2px solid #8a877a;border-left:2px solid #8a877a;border-bottom:1px solid #f8f6ee;border-right:1px solid #f8f6ee'></div>
<div class='a' style='left:249.10000000000002px;top:393.5px;width:13px;height:13.2px;background:#ece9d8;border-right:2px solid #77746a;border-bottom:1.5px solid #77746a;box-shadow:inset 1px 1px 0 #fff'></div>
<div class='a' style='left:252.10000000000002px;top:397.85px;width:0;height:0;border-left:3.2px solid transparent;border-right:3.2px solid transparent;border-top:3.2px solid #000'></div>
<div class='t' style='left:229.1px;top:395.6px;font-size:8px;color:#000;'>4</div>
<div class='a' style='left:77px;top:411.5px;width:199px;height:12.6px;background:#0000d0'></div>
<div class='a' style='left:77.6px;top:413.2px;width:10px;height:10px;background:#fff;border-top:1px solid #a09d90;border-left:1px solid #a09d90;border-bottom:1px solid #fafaf6;border-right:1px solid #fafaf6;box-shadow:inset 1px 1px 0 #85837a'></div>
<div class='t' style='left:90.1px;top:413.2px;font-size:8.7px;font-weight:bold;color:#fff'>Filtri opzionali disabilitati</div>
<div class='a' style='left:77px;top:427.5px;width:199px;height:52.6px;background:#c4ffc4'></div>
<div class='a' style='left:78px;top:432.5px;width:197px;height:47px;border:1px solid #a8b0a0;box-shadow:inset 1px 1px 0 #f0fff0'></div>
<div class='t' style='left:82.5px;top:429.3px;padding:0 1.5px;background:#c4ffc4;font-size:8px;color:#8b1818'>Amplificatori della massa numerica</div>
<div class='a' style='left:83.5px;top:441.1px;width:9.5px;height:9.5px;background:#fff;border-top:1px solid #a8a598;border-left:1px solid #a8a598;border-bottom:1px solid #fafaf6;border-right:1px solid #fafaf6;box-shadow:inset 1px 1px 0 #c0beb2'></div>
<div class='t' style='left:96.6px;top:442.3px;font-size:8px;color:#22228a;transform:scaleY(1.1);transform-origin:0 50%;'>Vertibili</div>
<div class='a' style='left:143.2px;top:441.1px;width:9.5px;height:9.5px;background:#fff;border-top:1px solid #a8a598;border-left:1px solid #a8a598;border-bottom:1px solid #fafaf6;border-right:1px solid #fafaf6;box-shadow:inset 1px 1px 0 #c0beb2'></div>
<div class='t' style='left:156.3px;top:442.3px;font-size:8px;color:#22228a;transform:scaleY(1.1);transform-origin:0 50%;'>Diam. decina</div>
<div class='a' style='left:222px;top:441.1px;width:9.5px;height:9.5px;background:#fff;border-top:1px solid #a8a598;border-left:1px solid #a8a598;border-bottom:1px solid #fafaf6;border-right:1px solid #fafaf6;box-shadow:inset 1px 1px 0 #c0beb2'></div>
<div class='t' style='left:233.9px;top:442.3px;font-size:8px;color:#22228a;transform:scaleY(1.1);transform-origin:0 50%;'>Quadrato</div>
<div class='a' style='left:83.5px;top:453px;width:9.5px;height:9.5px;background:#fff;border-top:1px solid #a8a598;border-left:1px solid #a8a598;border-bottom:1px solid #fafaf6;border-right:1px solid #fafaf6;box-shadow:inset 1px 1px 0 #c0beb2'></div>
<div class='t' style='left:96.6px;top:454.2px;font-size:8px;color:#22228a;transform:scaleY(1.1);transform-origin:0 50%;'>Diametrali</div>
<div class='a' style='left:143.2px;top:453px;width:9.5px;height:9.5px;background:#fff;border-top:1px solid #a8a598;border-left:1px solid #a8a598;border-bottom:1px solid #fafaf6;border-right:1px solid #fafaf6;box-shadow:inset 1px 1px 0 #c0beb2'></div>
<div class='t' style='left:156.3px;top:454.2px;font-size:8px;color:#22228a;transform:scaleY(1.1);transform-origin:0 50%;'>Complem. a 90</div>
<div class='a' style='left:222px;top:453px;width:9.5px;height:9.5px;background:#fff;border-top:1px solid #a8a598;border-left:1px solid #a8a598;border-bottom:1px solid #fafaf6;border-right:1px solid #fafaf6;box-shadow:inset 1px 1px 0 #c0beb2'></div>
<div class='t' style='left:233.9px;top:454.2px;font-size:8px;color:#22228a;transform:scaleY(1.1);transform-origin:0 50%;'>Cubo</div>
<div class='a' style='left:83.5px;top:464.5px;width:9.5px;height:9.5px;background:#fff;border-top:1px solid #a8a598;border-left:1px solid #a8a598;border-bottom:1px solid #fafaf6;border-right:1px solid #fafaf6;box-shadow:inset 1px 1px 0 #c0beb2'></div>
<div class='t' style='left:96.6px;top:465.7px;font-size:8px;color:#22228a;transform:scaleY(1.1);transform-origin:0 50%;'>Simm. a 91</div>
<div class='a' style='left:143.2px;top:464.5px;width:9.5px;height:9.5px;background:#fff;border-top:1px solid #a8a598;border-left:1px solid #a8a598;border-bottom:1px solid #fafaf6;border-right:1px solid #fafaf6;box-shadow:inset 1px 1px 0 #c0beb2'></div>
<div class='t' style='left:156.3px;top:465.7px;font-size:8px;color:#22228a;transform:scaleY(1.1);transform-origin:0 50%;'>Oscillatori</div>
<div class='a' style='left:222px;top:464.5px;width:9.5px;height:9.5px;background:#fff;border-top:1px solid #a8a598;border-left:1px solid #a8a598;border-bottom:1px solid #fafaf6;border-right:1px solid #fafaf6;box-shadow:inset 1px 1px 0 #c0beb2'></div>
<div class='t' style='left:233.9px;top:465.7px;font-size:8px;color:#22228a;transform:scaleY(1.1);transform-origin:0 50%;'>Sim30</div>
<div class='t' style='left:76.9px;top:488.3px;font-size:8px;color:#1e1e8c;transform:scaleY(1.1);transform-origin:0 50%;'>Considera la lunghetta derivante per la sorte di:</div>
<div class='a' style='left:77.4px;top:499px;width:185px;height:15.6px;background:#ffc090;border-top:2px solid #8a877a;border-left:2px solid #8a877a;border-bottom:1px solid #f8f6ee;border-right:1px solid #f8f6ee'></div>
<div class='a' style='left:249.39999999999998px;top:501px;width:13px;height:13.6px;background:#ece9d8;border-right:2px solid #77746a;border-bottom:1.5px solid #77746a;box-shadow:inset 1px 1px 0 #fff'></div>
<div class='a' style='left:252.39999999999998px;top:505.55px;width:0;height:0;border-left:3.2px solid transparent;border-right:3.2px solid transparent;border-top:3.2px solid #000'></div>
<div class='t' style='left:80.7px;top:503px;font-size:9.7px;color:#1a1a8a;font-weight:bold;'>Nessuna Lunghetta</div>
<div class='t' style='left:73.8px;top:535px;font-size:8px;color:#a01010;letter-spacing:0.8px'>- - -</div>
<div class='t' style='left:177px;top:555px;font-size:9px;font-weight:bold;color:#900c0c'>...</div>
<div class='t' style='left:202.7px;top:554.5px;font-size:8px;color:#1e1e8c;transform:scaleY(1.1);transform-origin:0 50%;'>Elabora</div>
<svg class='a' style='left:240px;top:530px' width='42' height='42' viewBox='0 0 42 42'>
<defs>
<radialGradient id='gR' cx='0.45' cy='0.35' r='0.65'><stop offset='0' stop-color='#ff5050'/><stop offset='0.7' stop-color='#d00000'/><stop offset='1' stop-color='#800000'/></radialGradient>
<radialGradient id='gY' cx='0.5' cy='0.4' r='0.6'><stop offset='0' stop-color='#fff080'/><stop offset='1' stop-color='#e0a800'/></radialGradient>
<radialGradient id='gB' cx='0.45' cy='0.3' r='0.7'><stop offset='0' stop-color='#707070'/><stop offset='0.5' stop-color='#202020'/><stop offset='1' stop-color='#000'/></radialGradient>
</defs>
<circle cx='21' cy='21' r='20' fill='url(#gR)'/>
<circle cx='21' cy='21' r='15.3' fill='url(#gY)'/>
<circle cx='21' cy='21' r='10' fill='url(#gB)'/>
<ellipse cx='21' cy='7' rx='11' ry='4.5' fill='#fff' opacity='0.3'/><circle cx='21' cy='21' r='10.6' fill='none' stroke='#201808' stroke-width='0.8' opacity='0.6'/><ellipse cx='21' cy='15.5' rx='5' ry='3' fill='#fff' opacity='0.3'/>
</svg>
<div class='a' style='left:292px;top:66.8px;width:445px;height:114.5px;border:1px solid #aca899;border-right-color:#c8c5b8;border-bottom-color:#c8c5b8;box-shadow:inset 1px 1px 0 #fff'></div>
<svg class='a' style='left:298.7px;top:80px' width='48' height='46' viewBox='0 0 48 46'><defs><radialGradient id='k0' cx='0.5' cy='0.25' r='0.8'><stop offset='0' stop-color='#ffffff'/><stop offset='0.55' stop-color='#dcdcdc'/><stop offset='1' stop-color='#a0a0a0'/></radialGradient>
<linearGradient id='bg0' x1='0' y1='0' x2='1' y2='1'><stop offset='0' stop-color='#4a94de'/><stop offset='1' stop-color='#2c6ab8'/></linearGradient></defs>
<rect x='0.5' y='0.5' width='46.5' height='45' fill='url(#bg0)' stroke='#0c1428'/>
<ellipse cx='23.6' cy='22.8' rx='21' ry='20' fill='url(#k0)'/>
<ellipse cx='24' cy='36' rx='13' ry='4.5' fill='#a0a0a0' opacity='0.3'/>
<ellipse cx='22.5' cy='18.5' rx='17.5' ry='15' fill='#f4f4f4'/>
<ellipse cx='22.2' cy='18' rx='16' ry='13.8' fill='#f0f8ff' /><ellipse cx='22.2' cy='18' rx='14.6' ry='12.6' fill='#1a78d0'/><ellipse cx='22.2' cy='18' rx='13.2' ry='11.3' fill='none' stroke='#d8ecff' stroke-width='0.7'/>
<path d='M17.5 14 C17.5 10 27 9.5 27 14 C27 17.5 22.5 17.5 22.5 21' fill='none' stroke='#50e0f8' stroke-width='3' stroke-linecap='round'/><circle cx='22.3' cy='25' r='1.8' fill='#50e0f8'/></svg>
<div class='t' style='left:282.5px;width:80px;text-align:center;top:70px;font-size:8px;color:#7e0c0c'>Info</div>
<svg class='a' style='left:353px;top:80px' width='48' height='46' viewBox='0 0 48 46'><defs><radialGradient id='k1' cx='0.5' cy='0.25' r='0.8'><stop offset='0' stop-color='#d0f4fa'/><stop offset='0.55' stop-color='#88cfe0'/><stop offset='1' stop-color='#4a9cbc'/></radialGradient>
<linearGradient id='bg1' x1='0' y1='0' x2='1' y2='1'><stop offset='0' stop-color='#4a94de'/><stop offset='1' stop-color='#2c6ab8'/></linearGradient></defs>
<rect x='0.5' y='0.5' width='46.5' height='45' fill='url(#bg1)' stroke='#0c1428'/>
<ellipse cx='23.6' cy='22.8' rx='21' ry='20' fill='url(#k1)'/>
<ellipse cx='24' cy='36' rx='13' ry='4.5' fill='#4a9cbc' opacity='0.3'/>
<ellipse cx='22.5' cy='18.5' rx='17.5' ry='15' fill='#b8e8f2'/>
<ellipse cx='22.2' cy='18' rx='16' ry='13.8' fill='#d81818' /><ellipse cx='22' cy='10' rx='11' ry='5' fill='#f06060' opacity='0.45'/>
<path d='M23.5 7 C24.5 11 29.5 13 29.5 19 C29.5 24 25.5 26.5 22 26.5 C17.5 26.5 15 23.5 15 20 C15 16.5 17.5 15 18.5 13 C19 15.5 20 16.5 21 17 C21.5 13 22.5 10 23.5 7Z' fill='#f8f8f8'/></svg>
<div class='t' style='left:336.8px;width:80px;text-align:center;top:70px;font-size:8px;color:#7e0c0c'>Ottimizza</div>
<svg class='a' style='left:407px;top:80px' width='48' height='46' viewBox='0 0 48 46'><defs><radialGradient id='k2' cx='0.5' cy='0.25' r='0.8'><stop offset='0' stop-color='#ffffff'/><stop offset='0.55' stop-color='#dcdcdc'/><stop offset='1' stop-color='#a0a0a0'/></radialGradient>
<linearGradient id='bg2' x1='0' y1='0' x2='1' y2='1'><stop offset='0' stop-color='#4a94de'/><stop offset='1' stop-color='#2c6ab8'/></linearGradient></defs>
<rect x='0.5' y='0.5' width='46.5' height='45' fill='url(#bg2)' stroke='#0c1428'/>
<ellipse cx='23.6' cy='22.8' rx='21' ry='20' fill='url(#k2)'/>
<ellipse cx='24' cy='36' rx='13' ry='4.5' fill='#a0a0a0' opacity='0.3'/>
<ellipse cx='22.5' cy='18.5' rx='17.5' ry='15' fill='#f4f4f4'/>
<ellipse cx='22.2' cy='18' rx='16' ry='13.8' fill='#f0f8e8' /><ellipse cx='22.2' cy='18' rx='14.6' ry='12.6' fill='#5a9a28'/><ellipse cx='22.2' cy='18' rx='13' ry='11' fill='none' stroke='#c8e8a0' stroke-width='0.6'/>
<g transform='translate(22.2 18)'><circle r='6.8' fill='#c8f080'/><rect x='-1.6' y='-9.5' width='3.2' height='4' fill='#c8f080' transform='rotate(0)'/><rect x='-1.6' y='-9.5' width='3.2' height='4' fill='#c8f080' transform='rotate(45)'/><rect x='-1.6' y='-9.5' width='3.2' height='4' fill='#c8f080' transform='rotate(90)'/><rect x='-1.6' y='-9.5' width='3.2' height='4' fill='#c8f080' transform='rotate(135)'/><rect x='-1.6' y='-9.5' width='3.2' height='4' fill='#c8f080' transform='rotate(180)'/><rect x='-1.6' y='-9.5' width='3.2' height='4' fill='#c8f080' transform='rotate(225)'/><rect x='-1.6' y='-9.5' width='3.2' height='4' fill='#c8f080' transform='rotate(270)'/><rect x='-1.6' y='-9.5' width='3.2' height='4' fill='#c8f080' transform='rotate(315)'/><circle r='4' fill='#70b038'/><circle r='2.5' fill='#5a9a28'/></g></svg>
<div class='t' style='left:390.8px;width:80px;text-align:center;top:70px;font-size:8px;color:#7e0c0c'>Abbinamenti</div>
<svg class='a' style='left:461px;top:80px' width='48' height='46' viewBox='0 0 48 46'><defs><radialGradient id='k3' cx='0.5' cy='0.25' r='0.8'><stop offset='0' stop-color='#d0f4fa'/><stop offset='0.55' stop-color='#88cfe0'/><stop offset='1' stop-color='#4a9cbc'/></radialGradient>
<linearGradient id='bg3' x1='0' y1='0' x2='1' y2='1'><stop offset='0' stop-color='#4a94de'/><stop offset='1' stop-color='#2c6ab8'/></linearGradient></defs>
<rect x='0.5' y='0.5' width='46.5' height='45' fill='url(#bg3)' stroke='#0c1428'/>
<ellipse cx='23.6' cy='22.8' rx='21' ry='20' fill='url(#k3)'/>
<ellipse cx='24' cy='36' rx='13' ry='4.5' fill='#4a9cbc' opacity='0.3'/>
<ellipse cx='22.5' cy='18.5' rx='17.5' ry='15' fill='#b8e8f2'/>
<defs><linearGradient id='mt' x1='0' y1='0' x2='0' y2='1'><stop offset='0' stop-color='#5068c8'/><stop offset='0.5' stop-color='#1a2a90'/><stop offset='1' stop-color='#2a48c0'/></linearGradient></defs><ellipse cx='22.2' cy='18' rx='16' ry='13.8' fill='url(#mt)' />
<ellipse cx='22' cy='18' rx='19.5' ry='4.8' transform='rotate(-14 22 18)' fill='none' stroke='#f4f4f4' stroke-width='2.4'/><path d='M28 9.5 C20 7.5 14 12 19 16.5 C22 19 20.5 23 14.5 23.5 C22 28 31 24 26 18.5 C23 15.5 24 12 28 9.5Z' fill='#f8f8f8'/></svg>
<div class='t' style='left:444.8px;width:80px;text-align:center;top:70px;font-size:8px;color:#7e0c0c'>MultiTek</div>
<svg class='a' style='left:515px;top:80px' width='48' height='46' viewBox='0 0 48 46'><defs><radialGradient id='k4' cx='0.5' cy='0.25' r='0.8'><stop offset='0' stop-color='#d0f4fa'/><stop offset='0.55' stop-color='#88cfe0'/><stop offset='1' stop-color='#4a9cbc'/></radialGradient>
<linearGradient id='bg4' x1='0' y1='0' x2='1' y2='1'><stop offset='0' stop-color='#4a94de'/><stop offset='1' stop-color='#2c6ab8'/></linearGradient></defs>
<rect x='0.5' y='0.5' width='46.5' height='45' fill='url(#bg4)' stroke='#0c1428'/>
<ellipse cx='23.6' cy='22.8' rx='21' ry='20' fill='url(#k4)'/>
<ellipse cx='24' cy='36' rx='13' ry='4.5' fill='#4a9cbc' opacity='0.3'/>
<ellipse cx='22.5' cy='18.5' rx='17.5' ry='15' fill='#b8e8f2'/>
<ellipse cx='22.2' cy='18' rx='16' ry='13.8' fill='#f8f8f8' />
<g fill='none' stroke='#5aa028' stroke-width='2.6'><path d='M16 16 L20 10 L24 10'/><path d='M27 13 L29 18 L26 23'/><path d='M22 24 L16 24 L14 20'/></g><path d='M23 7.5 L27 11 L22.5 12.5Z M30.5 23.5 L25 25 L26 20.5Z M12 21.5 L13.5 16.5 L17 19Z' fill='#5aa028'/></svg>
<div class='t' style='left:498.79999999999995px;width:80px;text-align:center;top:70px;font-size:8px;color:#7e0c0c'>SuperConv</div>
<svg class='a' style='left:569px;top:80px' width='48' height='46' viewBox='0 0 48 46'><defs><radialGradient id='k5' cx='0.5' cy='0.25' r='0.8'><stop offset='0' stop-color='#d0f4fa'/><stop offset='0.55' stop-color='#88cfe0'/><stop offset='1' stop-color='#4a9cbc'/></radialGradient>
<linearGradient id='bg5' x1='0' y1='0' x2='1' y2='1'><stop offset='0' stop-color='#4a94de'/><stop offset='1' stop-color='#2c6ab8'/></linearGradient></defs>
<rect x='0.5' y='0.5' width='46.5' height='45' fill='url(#bg5)' stroke='#0c1428'/>
<ellipse cx='23.6' cy='22.8' rx='21' ry='20' fill='url(#k5)'/>
<ellipse cx='24' cy='36' rx='13' ry='4.5' fill='#4a9cbc' opacity='0.3'/>
<ellipse cx='22.5' cy='18.5' rx='17.5' ry='15' fill='#b8e8f2'/>
<ellipse cx='22.2' cy='18' rx='16' ry='13.8' fill='#f8f8f8' />
<rect x='12' y='8' width='20' height='19' rx='3.5' transform='rotate(22 22 17.5)' fill='#8a48b8'/><path d='M15 14 Q22 11 29 15' stroke='#e8d8f8' stroke-width='1' fill='none'/><path d='M16 20 Q18.5 23.5 21 20.5 M23 21.5 Q25.5 25 28 22' stroke='#f0e8f8' stroke-width='1.2' fill='none'/></svg>
<div class='t' style='left:552.8px;width:80px;text-align:center;top:70px;font-size:8px;color:#7e0c0c'>Equilibrio</div>
<svg class='a' style='left:622.3px;top:80px' width='48' height='46' viewBox='0 0 48 46'><defs><radialGradient id='k6' cx='0.5' cy='0.25' r='0.8'><stop offset='0' stop-color='#d0f4fa'/><stop offset='0.55' stop-color='#88cfe0'/><stop offset='1' stop-color='#4a9cbc'/></radialGradient>
<linearGradient id='bg6' x1='0' y1='0' x2='1' y2='1'><stop offset='0' stop-color='#4a94de'/><stop offset='1' stop-color='#2c6ab8'/></linearGradient></defs>
<rect x='0.5' y='0.5' width='46.5' height='45' fill='url(#bg6)' stroke='#0c1428'/>
<ellipse cx='23.6' cy='22.8' rx='21' ry='20' fill='url(#k6)'/>
<ellipse cx='24' cy='36' rx='13' ry='4.5' fill='#4a9cbc' opacity='0.3'/>
<ellipse cx='22.5' cy='18.5' rx='17.5' ry='15' fill='#b8e8f2'/>
<defs><radialGradient id='mk' cx='0.5' cy='0.12' r='0.95'><stop offset='0' stop-color='#fffce0'/><stop offset='0.3' stop-color='#f8a040'/><stop offset='0.7' stop-color='#f06018'/><stop offset='1' stop-color='#d02008'/></radialGradient></defs><ellipse cx='22.2' cy='18' rx='16' ry='13.8' fill='url(#mk)' />
<g stroke='#fff4d0' stroke-width='1' opacity='0.8'><path d='M22 5 L10 19 M22 5 L15 27 M22 5 L22 31 M22 5 L29 27 M22 5 L35 19'/></g></svg>
<div class='t' style='left:606.0999999999999px;width:80px;text-align:center;top:70px;font-size:8px;color:#7e0c0c'>Markers</div>
<svg class='a' style='left:402.6px;top:128.5px' width='10' height='10' viewBox='0 0 10 10'><circle cx='5' cy='5' r='3.8' fill='#fdfdf8' stroke='#ecebe0' stroke-width='0.8'/><path d='M2.2 7.6 A3.9 3.9 0 0 1 7.8 2.3' fill='none' stroke='#6a6a60' stroke-width='1.1'/><circle cx='5' cy='5' r='1.5' fill='#000'/></svg>
<svg class='a' style='left:402.6px;top:140px' width='10' height='10' viewBox='0 0 10 10'><circle cx='5' cy='5' r='3.8' fill='#fdfdf8' stroke='#ecebe0' stroke-width='0.8'/><path d='M2.2 7.6 A3.9 3.9 0 0 1 7.8 2.3' fill='none' stroke='#6a6a60' stroke-width='1.1'/></svg>
<svg class='a' style='left:402.6px;top:151.6px' width='10' height='10' viewBox='0 0 10 10'><circle cx='5' cy='5' r='3.8' fill='#fdfdf8' stroke='#ecebe0' stroke-width='0.8'/><path d='M2.2 7.6 A3.9 3.9 0 0 1 7.8 2.3' fill='none' stroke='#6a6a60' stroke-width='1.1'/></svg>
<div class='t' style='left:416px;top:128.9px;font-size:8.5px;font-weight:bold;color:#7e0c0c'>A-Fast</div>
<div class='t' style='left:416px;top:141.1px;font-size:8px;color:#7e0c0c'>A-Medium</div>
<div class='t' style='left:416px;top:152.7px;font-size:8px;color:#7e0c0c'>A-Deep</div>
<div class='a' style='left:298.7px;top:163.8px;width:229.5px;height:12.2px;background:#ffff00'></div>
<div class='t' style='left:299px;top:165px;font-size:9.8px;font-weight:bold;color:#1a1a8a;transform:scaleY(1.08);transform-origin:0 50%'>Algoritmo corrente: 3°BA +02..#3°BA +02.. W-DIA</div>
<div class='a' style='left:292.5px;top:187px;width:444.5px;height:169px;background:#c0c0ff;border:1px solid #5a5850;border-top:2px solid #5a5850;border-left:2px solid #5a5850;border-bottom:2px solid #5a5850'></div>
<div class='a' style='left:294.5px;top:188.5px;width:428.5px;height:12.5px;background:#ece9d8;border-bottom:1px solid #aca899'></div>
<div class='t g' style='left:297.7px;top:191.5px;font-size:8.2px;color:#000;-webkit-text-stroke:0.05px #000'>NG</div>
<div class='a' style='left:341.7px;top:189.5px;width:1px;height:11.5px;background:#aca899'></div>
<div class='a' style='left:342.7px;top:189.5px;width:1px;height:11.5px;background:#fff'></div>
<div class='t g' style='left:348.1px;top:191.5px;font-size:8.2px;color:#000;-webkit-text-stroke:0.05px #000'>Algoritmi</div>
<div class='a' style='left:502.3px;top:189.5px;width:1px;height:11.5px;background:#aca899'></div>
<div class='a' style='left:503.3px;top:189.5px;width:1px;height:11.5px;background:#fff'></div>
<div class='t g' style='left:503.3px;width:50.19999999999999px;text-align:center;top:191.5px;font-size:8.2px;color:#000;-webkit-text-stroke:0.05px #000'>Favorevoli</div>
<div class='a' style='left:552.5px;top:189.5px;width:1px;height:11.5px;background:#aca899'></div>
<div class='a' style='left:553.5px;top:189.5px;width:1px;height:11.5px;background:#fff'></div>
<div class='t g' style='left:553.5px;width:38.799999999999955px;text-align:center;top:191.5px;font-size:8.2px;color:#000;-webkit-text-stroke:0.05px #000'>Casi</div>
<div class='a' style='left:591.3px;top:189.5px;width:1px;height:11.5px;background:#aca899'></div>
<div class='a' style='left:592.3px;top:189.5px;width:1px;height:11.5px;background:#fff'></div>
<div class='t g' style='left:592.3px;width:50.40000000000009px;text-align:center;top:191.5px;font-size:8.2px;color:#000;-webkit-text-stroke:0.05px #000'>Previsione</div>
<div class='a' style='left:641.7px;top:189.5px;width:1px;height:11.5px;background:#aca899'></div>
<div class='a' style='left:642.7px;top:189.5px;width:1px;height:11.5px;background:#fff'></div>
<div class='t g' style='left:642.7px;width:50.299999999999955px;text-align:center;top:191.5px;font-size:8.2px;color:#000;-webkit-text-stroke:0.05px #000'>Ruote</div>
<div class='a' style='left:692px;top:189.5px;width:1px;height:11.5px;background:#aca899'></div>
<div class='a' style='left:693px;top:189.5px;width:1px;height:11.5px;background:#fff'></div>
<div class='t g' style='left:697.5px;top:191.5px;font-size:8.2px;color:#000;-webkit-text-stroke:0.05px #000'>ID...</div>
<div class='a' style='left:716.5px;top:189.5px;width:1px;height:11.5px;background:#aca899'></div>
<div class='a' style='left:717.5px;top:189.5px;width:1px;height:11.5px;background:#fff'></div>
<div class='a' style='left:294.5px;top:214.25px;width:428.5px;height:1px;background:#e4e0f0'></div>
<div class='a' style='left:294.5px;top:227.0px;width:428.5px;height:1px;background:#e4e0f0'></div>
<div class='a' style='left:294.5px;top:239.75px;width:428.5px;height:1px;background:#e4e0f0'></div>
<div class='a' style='left:294.5px;top:252.5px;width:428.5px;height:1px;background:#e4e0f0'></div>
<div class='a' style='left:294.5px;top:265.25px;width:428.5px;height:1px;background:#e4e0f0'></div>
<div class='a' style='left:294.5px;top:278.0px;width:428.5px;height:1px;background:#e4e0f0'></div>
<div class='a' style='left:294.5px;top:290.75px;width:428.5px;height:1px;background:#e4e0f0'></div>
<div class='a' style='left:294.5px;top:303.5px;width:428.5px;height:1px;background:#e4e0f0'></div>
<div class='a' style='left:294.5px;top:316.25px;width:428.5px;height:1px;background:#e4e0f0'></div>
<div class='a' style='left:294.5px;top:329.0px;width:428.5px;height:1px;background:#e4e0f0'></div>
<div class='a' style='left:294.5px;top:341.75px;width:428.5px;height:1px;background:#e4e0f0'></div>
<div class='a' style='left:343.5px;top:202px;width:1px;height:153.5px;background:#e4e0f0'></div>
<div class='a' style='left:504.1px;top:202px;width:1px;height:153.5px;background:#e4e0f0'></div>
<div class='a' style='left:554.3px;top:202px;width:1px;height:153.5px;background:#e4e0f0'></div>
<div class='a' style='left:593.0999999999999px;top:202px;width:1px;height:153.5px;background:#e4e0f0'></div>
<div class='a' style='left:643.5px;top:202px;width:1px;height:153.5px;background:#e4e0f0'></div>
<div class='a' style='left:693.8px;top:202px;width:1px;height:153.5px;background:#e4e0f0'></div>
<div class='a' style='left:718.3px;top:202px;width:1px;height:153.5px;background:#e4e0f0'></div>
<div class='a' style='left:307.2px;top:202.5px;width:410.8px;height:11.75px;background:#316ac5;border-bottom:1px dotted #c89850'></div>
<div class='a' style='left:342.7px;top:202.0px;width:1px;height:11.75px;background:#c8c0f0;opacity:0.6'></div>
<div class='a' style='left:503.3px;top:202.0px;width:1px;height:11.75px;background:#c8c0f0;opacity:0.6'></div>
<div class='a' style='left:553.5px;top:202.0px;width:1px;height:11.75px;background:#c8c0f0;opacity:0.6'></div>
<div class='a' style='left:592.3px;top:202.0px;width:1px;height:11.75px;background:#c8c0f0;opacity:0.6'></div>
<div class='a' style='left:642.7px;top:202.0px;width:1px;height:11.75px;background:#c8c0f0;opacity:0.6'></div>
<div class='a' style='left:693px;top:202.0px;width:1px;height:11.75px;background:#c8c0f0;opacity:0.6'></div>
<div class='a' style='left:296.8px;top:203.9px;width:9.6px;height:9.6px;border:1.7px solid #000'></div>
<div class='t g' style='left:306px;width:36px;text-align:center;top:204.6px;font-size:8.5px;color:#fff;-webkit-text-stroke:0.05px #fff'>182</div>
<div class='t g' style='left:347.8px;top:204.3px;font-size:8.5px;letter-spacing:-0.15px;color:#fff;-webkit-text-stroke:0.05px #fff'>3°BA +02..#3°BA +02.. W-DIA</div>
<div class='t g' style='left:501.8px;width:50.19999999999999px;text-align:center;top:204.6px;font-size:8.5px;color:#fff;-webkit-text-stroke:0.05px #fff'>76,92 %</div>
<div class='t g' style='left:557.0px;width:38.799999999999955px;text-align:center;top:204.6px;font-size:8.5px;color:#fff;-webkit-text-stroke:0.05px #fff'>10</div>
<div class='t g' style='left:592.3px;width:50.40000000000009px;text-align:center;top:204.6px;font-size:8.5px;color:#fff;-webkit-text-stroke:0.05px #fff'>89</div>
<div class='t g' style='left:642.7px;width:50.299999999999955px;text-align:center;top:204.6px;font-size:8.5px;color:#fff;-webkit-text-stroke:0.05px #fff'>TO</div>
<div class='t g' style='left:697px;top:204.6px;font-size:8.5px;color:#fff;-webkit-text-stroke:0.05px #fff'>1</div>
<div class='a' style='left:296.8px;top:216.65px;width:9.6px;height:9.6px;border:1.7px solid #000'></div>
<div class='t g' style='left:306px;width:36px;text-align:center;top:217.35px;font-size:8.5px;color:#f01818;-webkit-text-stroke:0.05px #f01818'>227</div>
<div class='t g' style='left:347.8px;top:217.05px;font-size:8.5px;letter-spacing:-0.15px;color:#1818e8;-webkit-text-stroke:0.05px #1818e8'>3°BA +47..#3°BA +47.. W-DIA</div>
<div class='t g' style='left:501.8px;width:50.19999999999999px;text-align:center;top:217.35px;font-size:8.5px;color:#1818e8;-webkit-text-stroke:0.05px #1818e8'>76,92 %</div>
<div class='t g' style='left:557.0px;width:38.799999999999955px;text-align:center;top:217.35px;font-size:8.5px;color:#1818e8;-webkit-text-stroke:0.05px #1818e8'>10</div>
<div class='t g' style='left:592.3px;width:50.40000000000009px;text-align:center;top:217.35px;font-size:8.5px;color:#1818e8;-webkit-text-stroke:0.05px #1818e8'>89</div>
<div class='t g' style='left:642.7px;width:50.299999999999955px;text-align:center;top:217.35px;font-size:8.5px;color:#1818e8;-webkit-text-stroke:0.05px #1818e8'>TO</div>
<div class='t g' style='left:697px;top:217.35px;font-size:8.5px;color:#1818e8;-webkit-text-stroke:0.05px #1818e8'>1</div>
<div class='a' style='left:296.8px;top:229.4px;width:9.6px;height:9.6px;border:1.7px solid #000'></div>
<div class='t g' style='left:306px;width:36px;text-align:center;top:230.1px;font-size:8.5px;color:#f01818;-webkit-text-stroke:0.05px #f01818'>312</div>
<div class='t g' style='left:347.8px;top:229.8px;font-size:8.5px;letter-spacing:-0.15px;color:#1818e8;-webkit-text-stroke:0.05px #1818e8'>4°BA +42..#4°BA +42.. W-DIA</div>
<div class='t g' style='left:501.8px;width:50.19999999999999px;text-align:center;top:230.1px;font-size:8.5px;color:#1818e8;-webkit-text-stroke:0.05px #1818e8'>76,92 %</div>
<div class='t g' style='left:557.0px;width:38.799999999999955px;text-align:center;top:230.1px;font-size:8.5px;color:#1818e8;-webkit-text-stroke:0.05px #1818e8'>10</div>
<div class='t g' style='left:592.3px;width:50.40000000000009px;text-align:center;top:230.1px;font-size:8.5px;color:#1818e8;-webkit-text-stroke:0.05px #1818e8'>14 59</div>
<div class='t g' style='left:642.7px;width:50.299999999999955px;text-align:center;top:230.1px;font-size:8.5px;color:#1818e8;-webkit-text-stroke:0.05px #1818e8'>TO</div>
<div class='t g' style='left:697px;top:230.1px;font-size:8.5px;color:#1818e8;-webkit-text-stroke:0.05px #1818e8'>1</div>
<div class='a' style='left:296.8px;top:242.15px;width:9.6px;height:9.6px;border:1.7px solid #000'></div>
<div class='t g' style='left:306px;width:36px;text-align:center;top:242.85px;font-size:8.5px;color:#f01818;-webkit-text-stroke:0.05px #f01818'>357</div>
<div class='t g' style='left:347.8px;top:242.55px;font-size:8.5px;letter-spacing:-0.15px;color:#1818e8;-webkit-text-stroke:0.05px #1818e8'>4°BA +87..#4°BA +87.. W-DIA</div>
<div class='t g' style='left:501.8px;width:50.19999999999999px;text-align:center;top:242.85px;font-size:8.5px;color:#1818e8;-webkit-text-stroke:0.05px #1818e8'>76,92 %</div>
<div class='t g' style='left:557.0px;width:38.799999999999955px;text-align:center;top:242.85px;font-size:8.5px;color:#1818e8;-webkit-text-stroke:0.05px #1818e8'>10</div>
<div class='t g' style='left:592.3px;width:50.40000000000009px;text-align:center;top:242.85px;font-size:8.5px;color:#1818e8;-webkit-text-stroke:0.05px #1818e8'>14 59</div>
<div class='t g' style='left:642.7px;width:50.299999999999955px;text-align:center;top:242.85px;font-size:8.5px;color:#1818e8;-webkit-text-stroke:0.05px #1818e8'>TO</div>
<div class='t g' style='left:697px;top:242.85px;font-size:8.5px;color:#1818e8;-webkit-text-stroke:0.05px #1818e8'>1</div>
<div class='a' style='left:296.8px;top:254.9px;width:9.6px;height:9.6px;border:1.7px solid #000'></div>
<div class='t g' style='left:306px;width:36px;text-align:center;top:255.6px;font-size:8.5px;color:#f01818;-webkit-text-stroke:0.05px #f01818'>7</div>
<div class='t g' style='left:347.8px;top:255.3px;font-size:8.5px;letter-spacing:-0.15px;color:#1818e8;-webkit-text-stroke:0.05px #1818e8'>1°BA +07..#1°BA +07.. W-DIA</div>
<div class='t g' style='left:501.8px;width:50.19999999999999px;text-align:center;top:255.6px;font-size:8.5px;color:#1818e8;-webkit-text-stroke:0.05px #1818e8'>69,23 %</div>
<div class='t g' style='left:557.0px;width:38.799999999999955px;text-align:center;top:255.6px;font-size:8.5px;color:#1818e8;-webkit-text-stroke:0.05px #1818e8'>9</div>
<div class='t g' style='left:592.3px;width:50.40000000000009px;text-align:center;top:255.6px;font-size:8.5px;color:#1818e8;-webkit-text-stroke:0.05px #1818e8'>27</div>
<div class='t g' style='left:642.7px;width:50.299999999999955px;text-align:center;top:255.6px;font-size:8.5px;color:#1818e8;-webkit-text-stroke:0.05px #1818e8'>TO</div>
<div class='t g' style='left:697px;top:255.6px;font-size:8.5px;color:#1818e8;-webkit-text-stroke:0.05px #1818e8'>1</div>
<div class='a' style='left:296.8px;top:267.65px;width:9.6px;height:9.6px;border:1.7px solid #000'></div>
<div class='t g' style='left:306px;width:36px;text-align:center;top:268.35px;font-size:8.5px;color:#f01818;-webkit-text-stroke:0.05px #f01818'>24</div>
<div class='t g' style='left:347.8px;top:268.05px;font-size:8.5px;letter-spacing:-0.15px;color:#1818e8;-webkit-text-stroke:0.05px #1818e8'>1°BA +24..#1°BA +24.. W-DIA</div>
<div class='t g' style='left:501.8px;width:50.19999999999999px;text-align:center;top:268.35px;font-size:8.5px;color:#1818e8;-webkit-text-stroke:0.05px #1818e8'>69,23 %</div>
<div class='t g' style='left:557.0px;width:38.799999999999955px;text-align:center;top:268.35px;font-size:8.5px;color:#1818e8;-webkit-text-stroke:0.05px #1818e8'>9</div>
<div class='t g' style='left:592.3px;width:50.40000000000009px;text-align:center;top:268.35px;font-size:8.5px;color:#1818e8;-webkit-text-stroke:0.05px #1818e8'>89</div>
<div class='t g' style='left:642.7px;width:50.299999999999955px;text-align:center;top:268.35px;font-size:8.5px;color:#1818e8;-webkit-text-stroke:0.05px #1818e8'>TO</div>
<div class='t g' style='left:697px;top:268.35px;font-size:8.5px;color:#1818e8;-webkit-text-stroke:0.05px #1818e8'>1</div>
<div class='a' style='left:296.8px;top:280.4px;width:9.6px;height:9.6px;border:1.7px solid #000'></div>
<div class='t g' style='left:306px;width:36px;text-align:center;top:281.1px;font-size:8.5px;color:#f01818;-webkit-text-stroke:0.05px #f01818'>38</div>
<div class='t g' style='left:347.8px;top:280.8px;font-size:8.5px;letter-spacing:-0.15px;color:#1818e8;-webkit-text-stroke:0.05px #1818e8'>1°BA +38..#1°BA +38.. W-DIA</div>
<div class='t g' style='left:501.8px;width:50.19999999999999px;text-align:center;top:281.1px;font-size:8.5px;color:#1818e8;-webkit-text-stroke:0.05px #1818e8'>69,23 %</div>
<div class='t g' style='left:557.0px;width:38.799999999999955px;text-align:center;top:281.1px;font-size:8.5px;color:#1818e8;-webkit-text-stroke:0.05px #1818e8'>9</div>
<div class='t g' style='left:592.3px;width:50.40000000000009px;text-align:center;top:281.1px;font-size:8.5px;color:#1818e8;-webkit-text-stroke:0.05px #1818e8'>13 58</div>
<div class='t g' style='left:642.7px;width:50.299999999999955px;text-align:center;top:281.1px;font-size:8.5px;color:#1818e8;-webkit-text-stroke:0.05px #1818e8'>TO</div>
<div class='t g' style='left:697px;top:281.1px;font-size:8.5px;color:#1818e8;-webkit-text-stroke:0.05px #1818e8'>1</div>
<div class='a' style='left:296.8px;top:293.15px;width:9.6px;height:9.6px;border:1.7px solid #000'></div>
<div class='t g' style='left:306px;width:36px;text-align:center;top:293.85px;font-size:8.5px;color:#f01818;-webkit-text-stroke:0.05px #f01818'>52</div>
<div class='t g' style='left:347.8px;top:293.55px;font-size:8.5px;letter-spacing:-0.15px;color:#1818e8;-webkit-text-stroke:0.05px #1818e8'>1°BA +52..#1°BA +52.. W-DIA</div>
<div class='t g' style='left:501.8px;width:50.19999999999999px;text-align:center;top:293.85px;font-size:8.5px;color:#1818e8;-webkit-text-stroke:0.05px #1818e8'>69,23 %</div>
<div class='t g' style='left:557.0px;width:38.799999999999955px;text-align:center;top:293.85px;font-size:8.5px;color:#1818e8;-webkit-text-stroke:0.05px #1818e8'>9</div>
<div class='t g' style='left:592.3px;width:50.40000000000009px;text-align:center;top:293.85px;font-size:8.5px;color:#1818e8;-webkit-text-stroke:0.05px #1818e8'>27</div>
<div class='t g' style='left:642.7px;width:50.299999999999955px;text-align:center;top:293.85px;font-size:8.5px;color:#1818e8;-webkit-text-stroke:0.05px #1818e8'>TO</div>
<div class='t g' style='left:697px;top:293.85px;font-size:8.5px;color:#1818e8;-webkit-text-stroke:0.05px #1818e8'>1</div>
<div class='a' style='left:296.8px;top:305.9px;width:9.6px;height:9.6px;border:1.7px solid #000'></div>
<div class='t g' style='left:306px;width:36px;text-align:center;top:306.6px;font-size:8.5px;color:#f01818;-webkit-text-stroke:0.05px #f01818'>69</div>
<div class='t g' style='left:347.8px;top:306.3px;font-size:8.5px;letter-spacing:-0.15px;color:#1818e8;-webkit-text-stroke:0.05px #1818e8'>1°BA +69..#1°BA +69.. W-DIA</div>
<div class='t g' style='left:501.8px;width:50.19999999999999px;text-align:center;top:306.6px;font-size:8.5px;color:#1818e8;-webkit-text-stroke:0.05px #1818e8'>69,23 %</div>
<div class='t g' style='left:557.0px;width:38.799999999999955px;text-align:center;top:306.6px;font-size:8.5px;color:#1818e8;-webkit-text-stroke:0.05px #1818e8'>9</div>
<div class='t g' style='left:592.3px;width:50.40000000000009px;text-align:center;top:306.6px;font-size:8.5px;color:#1818e8;-webkit-text-stroke:0.05px #1818e8'>89</div>
<div class='t g' style='left:642.7px;width:50.299999999999955px;text-align:center;top:306.6px;font-size:8.5px;color:#1818e8;-webkit-text-stroke:0.05px #1818e8'>TO</div>
<div class='t g' style='left:697px;top:306.6px;font-size:8.5px;color:#1818e8;-webkit-text-stroke:0.05px #1818e8'>1</div>
<div class='a' style='left:296.8px;top:318.65px;width:9.6px;height:9.6px;border:1.7px solid #000'></div>
<div class='t g' style='left:306px;width:36px;text-align:center;top:319.35px;font-size:8.5px;color:#f01818;-webkit-text-stroke:0.05px #f01818'>83</div>
<div class='t g' style='left:347.8px;top:319.05px;font-size:8.5px;letter-spacing:-0.15px;color:#1818e8;-webkit-text-stroke:0.05px #1818e8'>1°BA +83..#1°BA +83.. W-DIA</div>
<div class='t g' style='left:501.8px;width:50.19999999999999px;text-align:center;top:319.35px;font-size:8.5px;color:#1818e8;-webkit-text-stroke:0.05px #1818e8'>69,23 %</div>
<div class='t g' style='left:557.0px;width:38.799999999999955px;text-align:center;top:319.35px;font-size:8.5px;color:#1818e8;-webkit-text-stroke:0.05px #1818e8'>9</div>
<div class='t g' style='left:592.3px;width:50.40000000000009px;text-align:center;top:319.35px;font-size:8.5px;color:#1818e8;-webkit-text-stroke:0.05px #1818e8'>13 58</div>
<div class='t g' style='left:642.7px;width:50.299999999999955px;text-align:center;top:319.35px;font-size:8.5px;color:#1818e8;-webkit-text-stroke:0.05px #1818e8'>TO</div>
<div class='t g' style='left:697px;top:319.35px;font-size:8.5px;color:#1818e8;-webkit-text-stroke:0.05px #1818e8'>1</div>
<div class='a' style='left:296.8px;top:331.4px;width:9.6px;height:9.6px;border:1.7px solid #000'></div>
<div class='t g' style='left:306px;width:36px;text-align:center;top:332.1px;font-size:8.5px;color:#f01818;-webkit-text-stroke:0.05px #f01818'>94</div>
<div class='t g' style='left:347.8px;top:331.8px;font-size:8.5px;letter-spacing:-0.15px;color:#1818e8;-webkit-text-stroke:0.05px #1818e8'>2°BA +04..#2°BA +04.. W-DIA</div>
<div class='t g' style='left:501.8px;width:50.19999999999999px;text-align:center;top:332.1px;font-size:8.5px;color:#1818e8;-webkit-text-stroke:0.05px #1818e8'>69,23 %</div>
<div class='t g' style='left:557.0px;width:38.799999999999955px;text-align:center;top:332.1px;font-size:8.5px;color:#1818e8;-webkit-text-stroke:0.05px #1818e8'>9</div>
<div class='t g' style='left:642.7px;width:50.299999999999955px;text-align:center;top:332.1px;font-size:8.5px;color:#1818e8;-webkit-text-stroke:0.05px #1818e8'>TO</div>
<div class='t g' style='left:697px;top:332.1px;font-size:8.5px;color:#1818e8;-webkit-text-stroke:0.05px #1818e8'>1</div>
<div class='a' style='left:296.8px;top:344.15px;width:9.6px;height:9.6px;border:1.7px solid #000'></div>
<div class='t g' style='left:306px;width:36px;text-align:center;top:344.85px;font-size:8.5px;color:#f01818;-webkit-text-stroke:0.05px #f01818'>97</div>
<div class='t g' style='left:347.8px;top:344.55px;font-size:8.5px;letter-spacing:-0.15px;color:#1818e8;-webkit-text-stroke:0.05px #1818e8'>2°BA +07..#2°BA +07.. W-DIA</div>
<div class='t g' style='left:501.8px;width:50.19999999999999px;text-align:center;top:344.85px;font-size:8.5px;color:#1818e8;-webkit-text-stroke:0.05px #1818e8'>69,23 %</div>
<div class='t g' style='left:557.0px;width:38.799999999999955px;text-align:center;top:344.85px;font-size:8.5px;color:#1818e8;-webkit-text-stroke:0.05px #1818e8'>9</div>
<div class='t g' style='left:592.3px;width:50.40000000000009px;text-align:center;top:344.85px;font-size:8.5px;color:#1818e8;-webkit-text-stroke:0.05px #1818e8'>31</div>
<div class='t g' style='left:642.7px;width:50.299999999999955px;text-align:center;top:344.85px;font-size:8.5px;color:#1818e8;-webkit-text-stroke:0.05px #1818e8'>TO</div>
<div class='t g' style='left:697px;top:344.85px;font-size:8.5px;color:#1818e8;-webkit-text-stroke:0.05px #1818e8'>1</div>
<div class='a' style='left:723px;top:188.5px;width:13px;height:165.5px;background:linear-gradient(90deg,#f4f4f0,#fdfdfb)'></div>
<div class='a' style='left:724.5px;top:188.7px;width:11px;height:11.3px;border-radius:2px;background:linear-gradient(135deg,#e0ecff,#b8cff8);border:1px solid #d0dcf4'></div>
<svg class='a' style='left:724.5px;top:188.7px' width='11' height='11' viewBox='0 0 11 11'><path d='M2.5 7 L5.5 4 L8.5 7' fill='none' stroke='#4a5a80' stroke-width='1.5'/></svg>
<div class='a' style='left:724.5px;top:202px;width:11px;height:13.4px;border-radius:2px;background:linear-gradient(90deg,#cadaf8,#b8cef8);border:1px solid #d8e4f8'></div>
<svg class='a' style='left:724.5px;top:202px' width='11' height='13' viewBox='0 0 11 13'><path d='M3 4.5 H8 M3 6.5 H8 M3 8.5 H8' stroke='#8aa0d8' stroke-width='0.8'/></svg>
<div class='a' style='left:724.5px;top:343.3px;width:11px;height:10.5px;border-radius:2px;background:linear-gradient(135deg,#e0ecff,#b8cff8);border:1px solid #d0dcf4'></div>
<svg class='a' style='left:724.5px;top:343.3px' width='11' height='11' viewBox='0 0 11 11'><path d='M2.5 4 L5.5 7 L8.5 4' fill='none' stroke='#4a5a80' stroke-width='1.5'/></svg>
<div class='a' style='left:292.5px;top:361px;width:444.5px;height:138px;background:#ffffc8;border:1px solid #5a5850;border-top:2px solid #5a5850;border-left:2px solid #5a5850;border-bottom:2px solid #5a5850'></div>
<div class='a' style='left:294.5px;top:362.5px;width:441.5px;height:12.5px;background:#ece9d8;border-bottom:1px solid #aca899'></div>
<div class='t g' style='left:297.7px;top:365.5px;font-size:8.2px;color:#000;-webkit-text-stroke:0.05px #000'>NG</div>
<div class='a' style='left:341.7px;top:363.5px;width:1px;height:11.5px;background:#aca899'></div>
<div class='a' style='left:342.7px;top:363.5px;width:1px;height:11.5px;background:#fff'></div>
<div class='t g' style='left:348.1px;top:365.5px;font-size:8.2px;color:#000;-webkit-text-stroke:0.05px #000'>Algoritmi</div>
<div class='a' style='left:502.3px;top:363.5px;width:1px;height:11.5px;background:#aca899'></div>
<div class='a' style='left:503.3px;top:363.5px;width:1px;height:11.5px;background:#fff'></div>
<div class='t g' style='left:503.3px;width:50.19999999999999px;text-align:center;top:365.5px;font-size:8.2px;color:#000;-webkit-text-stroke:0.05px #000'>Favorevoli</div>
<div class='a' style='left:552.5px;top:363.5px;width:1px;height:11.5px;background:#aca899'></div>
<div class='a' style='left:553.5px;top:363.5px;width:1px;height:11.5px;background:#fff'></div>
<div class='t g' style='left:553.5px;width:38.799999999999955px;text-align:center;top:365.5px;font-size:8.2px;color:#000;-webkit-text-stroke:0.05px #000'>Casi</div>
<div class='a' style='left:591.3px;top:363.5px;width:1px;height:11.5px;background:#aca899'></div>
<div class='a' style='left:592.3px;top:363.5px;width:1px;height:11.5px;background:#fff'></div>
<div class='t g' style='left:592.3px;width:50.40000000000009px;text-align:center;top:365.5px;font-size:8.2px;color:#000;-webkit-text-stroke:0.05px #000'>Previsione</div>
<div class='a' style='left:641.7px;top:363.5px;width:1px;height:11.5px;background:#aca899'></div>
<div class='a' style='left:642.7px;top:363.5px;width:1px;height:11.5px;background:#fff'></div>
<div class='t g' style='left:642.7px;width:50.299999999999955px;text-align:center;top:365.5px;font-size:8.2px;color:#000;-webkit-text-stroke:0.05px #000'>Ruote</div>
<div class='a' style='left:692px;top:363.5px;width:1px;height:11.5px;background:#aca899'></div>
<div class='a' style='left:693px;top:363.5px;width:1px;height:11.5px;background:#fff'></div>
<div class='t g' style='left:697.5px;top:365.5px;font-size:8.2px;color:#000;-webkit-text-stroke:0.05px #000'>IDt...</div>
<div class='a' style='left:716.5px;top:363.5px;width:1px;height:11.5px;background:#aca899'></div>
<div class='a' style='left:717.5px;top:363.5px;width:1px;height:11.5px;background:#fff'></div>
<div class='a' style='left:294.5px;top:387.5px;width:441.5px;height:1px;background:#ece8c8'></div>
<div class='a' style='left:294.5px;top:400.25px;width:441.5px;height:1px;background:#ece8c8'></div>
<div class='a' style='left:294.5px;top:413.0px;width:441.5px;height:1px;background:#ece8c8'></div>
<div class='a' style='left:294.5px;top:425.75px;width:441.5px;height:1px;background:#ece8c8'></div>
<div class='a' style='left:294.5px;top:438.5px;width:441.5px;height:1px;background:#ece8c8'></div>
<div class='a' style='left:294.5px;top:451.25px;width:441.5px;height:1px;background:#ece8c8'></div>
<div class='a' style='left:294.5px;top:464.0px;width:441.5px;height:1px;background:#ece8c8'></div>
<div class='a' style='left:294.5px;top:476.75px;width:441.5px;height:1px;background:#ece8c8'></div>
<div class='a' style='left:294.5px;top:489.5px;width:441.5px;height:1px;background:#ece8c8'></div>
<div class='a' style='left:343.5px;top:375.25px;width:1px;height:123.25px;background:#ece8c8'></div>
<div class='a' style='left:504.1px;top:375.25px;width:1px;height:123.25px;background:#ece8c8'></div>
<div class='a' style='left:554.3px;top:375.25px;width:1px;height:123.25px;background:#ece8c8'></div>
<div class='a' style='left:593.0999999999999px;top:375.25px;width:1px;height:123.25px;background:#ece8c8'></div>
<div class='a' style='left:643.5px;top:375.25px;width:1px;height:123.25px;background:#ece8c8'></div>
<div class='a' style='left:693.8px;top:375.25px;width:1px;height:123.25px;background:#ece8c8'></div>
<div class='a' style='left:718.3px;top:375.25px;width:1px;height:123.25px;background:#ece8c8'></div>
<div class='a' style='left:296.8px;top:377.15px;width:9.6px;height:9.6px;border:1.7px solid #000'></div>
<div class='t g' style='left:306px;width:36px;text-align:center;top:377.85px;font-size:8.5px;color:#f01818;-webkit-text-stroke:0.05px #f01818'>1</div>
<div class='t g' style='left:347.8px;top:377.55px;font-size:8.5px;letter-spacing:-0.15px;color:#1818e8;-webkit-text-stroke:0.05px #1818e8'>3°BA +02..#3°BA +02.. W-DIA</div>
<div class='t g' style='left:501.8px;width:50.19999999999999px;text-align:center;top:377.85px;font-size:8.5px;color:#f01818;-webkit-text-stroke:0.05px #f01818'>92,31 %</div>
<div class='t g' style='left:557.0px;width:38.799999999999955px;text-align:center;top:377.85px;font-size:8.5px;color:#f01818;-webkit-text-stroke:0.05px #f01818'>12</div>
<div class='t g' style='left:592.3px;width:50.40000000000009px;text-align:center;top:377.85px;font-size:8.5px;color:#1818e8;-webkit-text-stroke:0.05px #1818e8'>89 44</div>
<div class='t g' style='left:642.7px;width:50.299999999999955px;text-align:center;top:377.85px;font-size:8.5px;color:#1818e8;-webkit-text-stroke:0.05px #1818e8'>TO</div>
<div class='t g' style='left:697px;top:377.85px;font-size:8.5px;color:#f01818;-webkit-text-stroke:0.05px #f01818'>1</div>
<div class='a' style='left:296.8px;top:389.9px;width:9.6px;height:9.6px;border:1.7px solid #000'></div>
<div class='t g' style='left:306px;width:36px;text-align:center;top:390.6px;font-size:8.5px;color:#f01818;-webkit-text-stroke:0.05px #f01818'>2</div>
<div class='t g' style='left:347.8px;top:390.3px;font-size:8.5px;letter-spacing:-0.15px;color:#1818e8;-webkit-text-stroke:0.05px #1818e8'>02..</div>
<div class='t g' style='left:501.8px;width:50.19999999999999px;text-align:center;top:390.6px;font-size:8.5px;color:#f01818;-webkit-text-stroke:0.05px #f01818'>38,46 %</div>
<div class='t g' style='left:557.0px;width:38.799999999999955px;text-align:center;top:390.6px;font-size:8.5px;color:#f01818;-webkit-text-stroke:0.05px #f01818'>5</div>
<div class='t g' style='left:592.3px;width:50.40000000000009px;text-align:center;top:390.6px;font-size:8.5px;color:#1818e8;-webkit-text-stroke:0.05px #1818e8'>02</div>
<div class='t g' style='left:642.7px;width:50.299999999999955px;text-align:center;top:390.6px;font-size:8.5px;color:#1818e8;-webkit-text-stroke:0.05px #1818e8'>TO</div>
<div class='t g' style='left:697px;top:390.6px;font-size:8.5px;color:#f01818;-webkit-text-stroke:0.05px #f01818'>1</div>
<div class='a' style='left:296.8px;top:402.65px;width:9.6px;height:9.6px;border:1.7px solid #000'></div>
<div class='t g' style='left:306px;width:36px;text-align:center;top:403.35px;font-size:8.5px;color:#f01818;-webkit-text-stroke:0.05px #f01818'>3</div>
<div class='t g' style='left:347.8px;top:403.05px;font-size:8.5px;letter-spacing:-0.15px;color:#1818e8;-webkit-text-stroke:0.05px #1818e8'>26..</div>
<div class='t g' style='left:501.8px;width:50.19999999999999px;text-align:center;top:403.35px;font-size:8.5px;color:#f01818;-webkit-text-stroke:0.05px #f01818'>30,77 %</div>
<div class='t g' style='left:557.0px;width:38.799999999999955px;text-align:center;top:403.35px;font-size:8.5px;color:#f01818;-webkit-text-stroke:0.05px #f01818'>4</div>
<div class='t g' style='left:592.3px;width:50.40000000000009px;text-align:center;top:403.35px;font-size:8.5px;color:#1818e8;-webkit-text-stroke:0.05px #1818e8'>26</div>
<div class='t g' style='left:642.7px;width:50.299999999999955px;text-align:center;top:403.35px;font-size:8.5px;color:#1818e8;-webkit-text-stroke:0.05px #1818e8'>TO</div>
<div class='t g' style='left:697px;top:403.35px;font-size:8.5px;color:#f01818;-webkit-text-stroke:0.05px #f01818'>1</div>
<div class='a' style='left:296.8px;top:415.4px;width:9.6px;height:9.6px;border:1.7px solid #000'></div>
<div class='t g' style='left:306px;width:36px;text-align:center;top:416.1px;font-size:8.5px;color:#f01818;-webkit-text-stroke:0.05px #f01818'>4</div>
<div class='t g' style='left:347.8px;top:415.8px;font-size:8.5px;letter-spacing:-0.15px;color:#1818e8;-webkit-text-stroke:0.05px #1818e8'>29..</div>
<div class='t g' style='left:501.8px;width:50.19999999999999px;text-align:center;top:416.1px;font-size:8.5px;color:#f01818;-webkit-text-stroke:0.05px #f01818'>30,77 %</div>
<div class='t g' style='left:557.0px;width:38.799999999999955px;text-align:center;top:416.1px;font-size:8.5px;color:#f01818;-webkit-text-stroke:0.05px #f01818'>4</div>
<div class='t g' style='left:592.3px;width:50.40000000000009px;text-align:center;top:416.1px;font-size:8.5px;color:#1818e8;-webkit-text-stroke:0.05px #1818e8'>29</div>
<div class='t g' style='left:642.7px;width:50.299999999999955px;text-align:center;top:416.1px;font-size:8.5px;color:#1818e8;-webkit-text-stroke:0.05px #1818e8'>TO</div>
<div class='t g' style='left:697px;top:416.1px;font-size:8.5px;color:#f01818;-webkit-text-stroke:0.05px #f01818'>1</div>
<div class='a' style='left:296.8px;top:428.15px;width:9.6px;height:9.6px;border:1.7px solid #000'></div>
<div class='t g' style='left:306px;width:36px;text-align:center;top:428.85px;font-size:8.5px;color:#f01818;-webkit-text-stroke:0.05px #f01818'>5</div>
<div class='t g' style='left:347.8px;top:428.55px;font-size:8.5px;letter-spacing:-0.15px;color:#1818e8;-webkit-text-stroke:0.05px #1818e8'>63..</div>
<div class='t g' style='left:501.8px;width:50.19999999999999px;text-align:center;top:428.85px;font-size:8.5px;color:#f01818;-webkit-text-stroke:0.05px #f01818'>30,77 %</div>
<div class='t g' style='left:557.0px;width:38.799999999999955px;text-align:center;top:428.85px;font-size:8.5px;color:#f01818;-webkit-text-stroke:0.05px #f01818'>4</div>
<div class='t g' style='left:592.3px;width:50.40000000000009px;text-align:center;top:428.85px;font-size:8.5px;color:#1818e8;-webkit-text-stroke:0.05px #1818e8'>63</div>
<div class='t g' style='left:642.7px;width:50.299999999999955px;text-align:center;top:428.85px;font-size:8.5px;color:#1818e8;-webkit-text-stroke:0.05px #1818e8'>TO</div>
<div class='t g' style='left:697px;top:428.85px;font-size:8.5px;color:#f01818;-webkit-text-stroke:0.05px #f01818'>1</div>
<div class='a' style='left:739px;top:190.5px;width:1px;height:24.5px;background:#c85040'></div>
<div class='a' style='left:739px;top:364.2px;width:1px;height:25px;background:#c85040'></div>
<div class='t' style='left:293.5px;top:505.8px;font-size:15.7px;font-weight:bold;color:#1a1a8a'>Elaborazione terminata!</div>
<svg class='a' style='left:293px;top:528.5px' width='48' height='44' viewBox='0 0 48 44'><defs><radialGradient id='kc' cx='0.5' cy='0.25' r='0.8'><stop offset='0' stop-color='#d0f4fa'/><stop offset='0.55' stop-color='#88cfe0'/><stop offset='1' stop-color='#4a9cbc'/></radialGradient>
<linearGradient id='bgc' x1='0' y1='0' x2='1' y2='1'><stop offset='0' stop-color='#4a94de'/><stop offset='1' stop-color='#2c6ab8'/></linearGradient></defs>
<rect x='0.5' y='0.5' width='46.5' height='43.5' fill='url(#bgc)' stroke='#0c1428'/>
<ellipse cx='23.6' cy='22.8' rx='21' ry='20' fill='url(#kc)'/>
<ellipse cx='24' cy='36' rx='13' ry='4.5' fill='#4a9cbc' opacity='0.3'/>
<ellipse cx='22.5' cy='18.5' rx='17.5' ry='15' fill='#b8e8f2'/>
<ellipse cx='23' cy='19' rx='15.5' ry='13.5' fill='#f8f8f8'/><ellipse cx='23' cy='24' rx='13' ry='7' fill='#e4e4e4' opacity='0.6'/>
<path d='M17 10 L31 12.5 L28.5 27 L24 26.5 L14.5 25Z' fill='#6aaa28'/><path d='M19.5 13.5 L28 15 M19 17 L27.5 18.5' stroke='#f0f8e0' stroke-width='1.3'/><path d='M24 26.5 L28.5 27 L29.5 22 L25 22.5Z' fill='#f4f4f4'/></svg>
<div class='t' style='left:346px;top:548px;font-size:8px;color:#1a1a8a'>Compendio statistico</div>
</body></html>
